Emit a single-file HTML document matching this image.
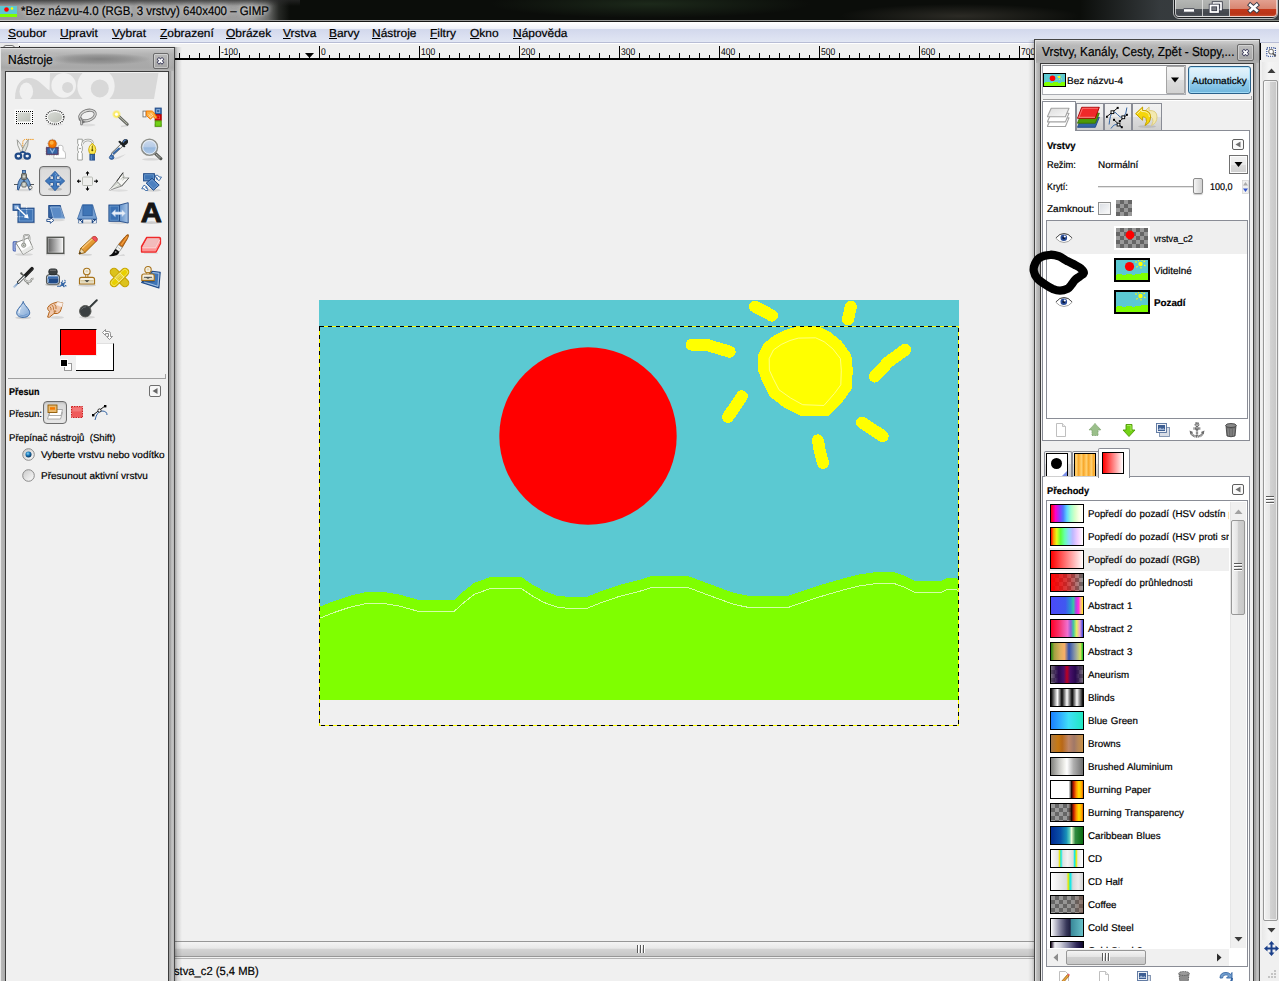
<!DOCTYPE html>
<html lang="cs">
<head>
<meta charset="utf-8">
<title>*Bez názvu-4.0 (RGB, 3 vrstvy) 640x400 – GIMP</title>
<style>
html,body{margin:0;padding:0;}
body{width:1279px;height:981px;overflow:hidden;position:relative;background:#f0f0f0;font-family:"Liberation Sans","DejaVu Sans",sans-serif;font-size:12px;color:#000;}
.abs,.abs *{position:absolute;}
div,svg,span{position:absolute;box-sizing:border-box;}
span{white-space:nowrap;-webkit-text-stroke:.2px #000;text-rendering:geometricPrecision;}
u{text-decoration:underline;text-underline-offset:1px;}
/* title bar */
#titlebar{left:0;top:0;width:1279px;height:22px;background:#0b0d0a;overflow:hidden;}
#menubar{left:0;top:22px;width:1279px;height:21px;background:linear-gradient(#fff 0,#fcfcfe 2px,#eef0f8 7px,#d2d8ec 7px,#d8ddef 12px,#e0e5f3 19px,#e3e8f5 20px,#b8bdd5 20px,#b8bdd5 21px);}
#menubar span{top:4.5px;font-size:11.6px;transform:scaleX(1.03);transform-origin:0 0;}
/* canvas area */
#canvasbg{left:175px;top:60px;width:860px;height:881px;background:#f0f0f0;}
#hruler{left:175px;top:43px;width:860px;height:17px;background:#f0f0f0;overflow:hidden;border-top:1px solid #fff;}
#menuline{left:0;top:43px;width:1279px;height:1px;background:#fff;}
#hscroll{left:175px;top:941px;width:860px;height:18px;}
#status{left:175px;top:959px;width:860px;height:22px;background:#f0f0f0;}
/* tool window */
.win{background:linear-gradient(90deg,#8d8d8d 0,#c9c9c9 2px,#bdbdbd 4px,#a9a9a9 6px);}
.sm{font-size:11px;}
</style>
</head>
<body>
<!-- ======= TITLE BAR ======= -->
<div id="titlebar">
  <div style="left:0;top:0;width:300px;height:22px;background:linear-gradient(90deg,#9a9a9a 0,#9c9c9c 252px,#6a6b69 268px,#262825 279px,rgba(11,13,10,0) 290px);"></div>
  <div style="left:0;top:0;width:300px;height:6px;background:linear-gradient(rgba(40,40,40,.75),rgba(40,40,40,0));"></div>
  <div style="left:400px;top:0;width:700px;height:20px;background:radial-gradient(ellipse 160px 14px at 250px 4px,rgba(30,44,28,.9),rgba(30,44,28,0)),radial-gradient(ellipse 120px 12px at 560px 16px,rgba(52,50,44,.8),rgba(52,50,44,0));"></div>
  <div style="left:0;top:20px;width:1279px;height:1px;background:linear-gradient(90deg,#c8c8c8,#9a9a9a 300px,#8a8e88);"></div>
  <div style="left:0;top:21px;width:1279px;height:1px;background:#151515;"></div>
  <svg style="left:0;top:6px" width="17" height="11" viewBox="0 0 17 11" shape-rendering="crispEdges"><rect width="17" height="11" fill="#5bc9d2"/><path d="M0 8l2-.5h3l2 .5 3-.5h3l2 .5h2v3h-17z" fill="#7fff00"/><circle cx="6.500" cy="3.500" r="2.300" fill="#f00" shape-rendering="auto"/><circle cx="12" cy="2.500" r="1.300" fill="#ff0" shape-rendering="auto"/></svg>
  <span style="left:21px;top:3.5px;font-size:12.5px;color:#000;transform:scaleX(.915);transform-origin:0 0;text-shadow:0 0 5px #ddd,0 0 8px #ccc;">*Bez názvu-4.0 (RGB, 3 vrstvy) 640x400 – GIMP</span>
  <div style="left:1080px;top:0;width:199px;height:20px;background:linear-gradient(90deg,rgba(56,61,64,0),rgba(56,61,64,.95) 80px,rgba(58,63,66,1) 199px);"></div>
  <div style="left:1173px;top:-3px;width:105px;height:22px;border:1px solid #b9bbbd;border-radius:0 0 6px 6px;background:#1d2022;"></div>
  <div style="left:1175px;top:-1px;width:28px;height:18px;border:1px solid rgba(235,235,235,.75);border-radius:0 0 0 4px;background:linear-gradient(#b4b6b4 0,#a6a8a6 9px,#4e5258 9px,#42464c 14px,#5c6068 17px);"></div>
  <div style="left:1203px;top:-1px;width:27px;height:18px;border:1px solid rgba(235,235,235,.75);border-left:none;background:linear-gradient(#b4b6b4 0,#a6a8a6 9px,#4e5258 9px,#42464c 14px,#5c6068 17px);"></div>
  <div style="left:1230px;top:-1px;width:47px;height:18px;border:1px solid rgba(245,225,220,.75);border-left:none;border-radius:0 0 4px 0;background:linear-gradient(#e2a090 0,#d88470 9px,#c4381a 9px,#b83418 14px,#d45c3c 17px);"></div>
  <svg style="left:1175px;top:0" width="102" height="17" viewBox="0 0 102 17"><rect x="8.500" y="8.700" width="11" height="3.500" rx=".5" fill="#fff" stroke="#3a3d4a" stroke-width=".9"/><g fill="none"><rect x="38.500" y="3" width="7.500" height="6.500" stroke="#3a3d4a" stroke-width="3.400"/><rect x="38.500" y="3" width="7.500" height="6.500" stroke="#fff" stroke-width="1.700"/><rect x="35.500" y="5.500" width="7.500" height="6.500" fill="#777a80" stroke="#3a3d4a" stroke-width="3.400"/><rect x="35.500" y="5.500" width="7.500" height="6.500" stroke="#fff" stroke-width="1.800"/></g><path d="M75.300 5L81.700 10.600M81.700 5L75.300 10.600" stroke="#3a3d4a" stroke-width="4.600" stroke-linecap="square"/><path d="M75.300 5L81.700 10.600M81.700 5L75.300 10.600" stroke="#fff" stroke-width="2.700" stroke-linecap="square"/></svg>
</div>
<!-- ======= MENU BAR ======= -->
<div id="menubar">
  <span style="left:8px"><u>S</u>oubor</span>
  <span style="left:60px"><u>U</u>pravit</span>
  <span style="left:112px"><u>V</u>ybrat</span>
  <span style="left:160px"><u>Z</u>obrazení</span>
  <span style="left:226px"><u>O</u>brázek</span>
  <span style="left:283px"><u>V</u>rstva</span>
  <span style="left:329px"><u>B</u>arvy</span>
  <span style="left:372px"><u>N</u>ástroje</span>
  <span style="left:430px"><u>F</u>iltry</span>
  <span style="left:470px"><u>O</u>kno</span>
  <span style="left:513px"><u>N</u>ápověda</span>
</div>
<div id="menuline"></div>
<!-- ======= RULER ======= -->
<div id="hruler"><svg style="left:0;top:-1px" width="860" height="17" viewBox="0 0 860 17" shape-rendering="crispEdges">
<rect x="0" y="15" width="860" height="2" fill="#000"/>
<path d="M4 10h1v5h-1zM14 12h1v3h-1zM24 10h1v5h-1zM34 12h1v3h-1zM44 3h1v12h-1zM54 12h1v3h-1zM64 10h1v5h-1zM74 12h1v3h-1zM84 10h1v5h-1zM94 12h1v3h-1zM104 10h1v5h-1zM114 12h1v3h-1zM124 10h1v5h-1zM134 12h1v3h-1zM144 3h1v12h-1zM154 12h1v3h-1zM164 10h1v5h-1zM174 12h1v3h-1zM184 10h1v5h-1zM194 12h1v3h-1zM204 10h1v5h-1zM214 12h1v3h-1zM224 10h1v5h-1zM234 12h1v3h-1zM244 3h1v12h-1zM254 12h1v3h-1zM264 10h1v5h-1zM274 12h1v3h-1zM284 10h1v5h-1zM294 12h1v3h-1zM304 10h1v5h-1zM314 12h1v3h-1zM324 10h1v5h-1zM334 12h1v3h-1zM344 3h1v12h-1zM354 12h1v3h-1zM364 10h1v5h-1zM374 12h1v3h-1zM384 10h1v5h-1zM394 12h1v3h-1zM404 10h1v5h-1zM414 12h1v3h-1zM424 10h1v5h-1zM434 12h1v3h-1zM444 3h1v12h-1zM454 12h1v3h-1zM464 10h1v5h-1zM474 12h1v3h-1zM484 10h1v5h-1zM494 12h1v3h-1zM504 10h1v5h-1zM514 12h1v3h-1zM524 10h1v5h-1zM534 12h1v3h-1zM544 3h1v12h-1zM554 12h1v3h-1zM564 10h1v5h-1zM574 12h1v3h-1zM584 10h1v5h-1zM594 12h1v3h-1zM604 10h1v5h-1zM614 12h1v3h-1zM624 10h1v5h-1zM634 12h1v3h-1zM644 3h1v12h-1zM654 12h1v3h-1zM664 10h1v5h-1zM674 12h1v3h-1zM684 10h1v5h-1zM694 12h1v3h-1zM704 10h1v5h-1zM714 12h1v3h-1zM724 10h1v5h-1zM734 12h1v3h-1zM744 3h1v12h-1zM754 12h1v3h-1zM764 10h1v5h-1zM774 12h1v3h-1zM784 10h1v5h-1zM794 12h1v3h-1zM804 10h1v5h-1zM814 12h1v3h-1zM824 10h1v5h-1zM834 12h1v3h-1zM844 3h1v12h-1zM854 12h1v3h-1z" fill="#000"/>
<path d="M130 10h9l-4.5 5z" fill="#000" shape-rendering="auto"/>
<g font-family="Liberation Sans,sans-serif" font-size="9.8" text-rendering="geometricPrecision" fill="#000" shape-rendering="auto"><text transform="translate(46 11.5) scale(.87 1)">-100</text><text transform="translate(146 11.5) scale(.87 1)">0</text><text transform="translate(246 11.5) scale(.87 1)">100</text><text transform="translate(346 11.5) scale(.87 1)">200</text><text transform="translate(446 11.5) scale(.87 1)">300</text><text transform="translate(546 11.5) scale(.87 1)">400</text><text transform="translate(646 11.5) scale(.87 1)">500</text><text transform="translate(746 11.5) scale(.87 1)">600</text><text transform="translate(846 11.5) scale(.87 1)">700</text></g>
</svg></div>
<!-- ======= CANVAS ======= -->
<div id="canvasbg"></div>
<svg id="img" style="left:319px;top:300px;" width="640" height="400" viewBox="0 0 640 400" shape-rendering="crispEdges">
<rect width="640" height="400" fill="#5bc9d2"/>
<circle cx="269" cy="136" r="88.7" fill="#ff0000" shape-rendering="auto"/>
<polygon points="477.3,27.3 499.9,27.3 511.1,32.5 522.4,41.9 531.8,55.0 533.3,70.0 532.1,88.8 524.3,100.0 510.2,115.1 483.0,115.7 466.1,107.6 451.1,96.3 443.6,81.3 439.4,70.0 439.8,55.0 445.4,43.8 454.8,36.3 466.1,30.6" fill="#ffff00" stroke="#ffff00" stroke-width="1" stroke-linejoin="round"/>
<polygon points="479.4,38.1 496.6,37.8 505.1,41.7 513.8,48.8 521.4,58.6 522.3,70.2 521.8,84.8 515.5,93.4 504.9,105.5 483.7,104.7 471.4,97.9 460.0,89.8 454.3,78.7 450.4,70.2 450.2,58.6 454.5,49.9 462.2,44.5 471.0,40.5" fill="none" stroke="#ffffa0" stroke-width="1" shape-rendering="auto" opacity=".8"/>
<g fill="none" stroke="#ffff00" stroke-width="12" stroke-linecap="round" stroke-linejoin="round"><polyline points="436.0,6.6 453.0,15.6"/><polyline points="531.8,6.6 529.0,19.4"/><polyline points="372.6,44.7 389.1,45.3 410.7,51.7"/><polyline points="586.2,49.8 569.3,62.0 555.8,76.6"/><polyline points="422.9,96.3 415.4,107.6 408.9,117.0"/><polyline points="543.0,122.6 563.7,136.1"/><polyline points="498.9,140.4 500.8,150.8 504.0,163.0"/></g>
<polygon points="0,307 15,301 30,296 45,292.5 65,292 80,294.5 100,300 135,300 145,291 155,283 170,277.5 202.5,277 212.5,284 225,291 237.5,295.5 250,297 267.5,297 282.5,291 300,285 320,280 332.5,276 369,276 385,282 400,287.5 415,293 430,296 469,296 485,290.5 505,284 522.5,279 540,274.5 557.5,272 575,272 585,275.5 596,281 622.5,281 627.5,278 637.5,278 640,280 640,400 0,400" fill="#7fff00"/>
<polyline points="0,318.5 15,312.5 30,307.5 45,304 65,303.5 80,306 100,311.5 135,311.5 145,302.5 155,294.5 170,289 202.5,288.5 212.5,295.5 225,302.5 237.5,307 250,308.5 267.5,308.5 282.5,302.5 300,296.5 320,291.5 332.5,287.5 369,287.5 385,293.5 400,299 415,304.5 430,307.5 469,307.5 485,302 505,295.5 522.5,290.5 540,286 557.5,283.5 575,283.5 585,287 596,292.5 622.5,292.5 627.5,289.5 637.5,289.5 640,291.5" fill="none" stroke="#d4ffa8" stroke-width="1" shape-rendering="crispEdges" opacity="1"/>
</svg>
<svg id="layerbound" style="left:319px;top:326px;" width="640" height="400" viewBox="0 0 640 400" shape-rendering="crispEdges">
<rect x="0.5" y="0.5" width="639" height="399" fill="none" stroke="#ffff00" stroke-width="1"/>
<rect x="0.5" y="0.5" width="639" height="399" fill="none" stroke="#000" stroke-width="1" stroke-dasharray="4 4"/>
</svg>
<!-- ======= H SCROLL / STATUS ======= -->
<div id="hscroll"><div style="left:0;top:0;width:860px;height:1px;background:#979797;"></div><div style="left:0;top:1px;width:860px;height:15px;background:linear-gradient(#f4f4f4,#e8e8e8 45%,#d4d4d4 50%,#c6c6c6);border-bottom:1px solid #979797;"></div><div style="left:0;top:17px;width:860px;height:1px;background:#b4b4b4;"></div>
<svg style="left:461px;top:4px" width="9" height="9" viewBox="0 0 9 9" shape-rendering="crispEdges"><path d="M1 0v8M4 0v8M7 0v8" stroke="#5a5a5a" stroke-width="1"/><path d="M2 0v8M5 0v8M8 0v8" stroke="#fff" stroke-width="1"/></svg></div>

<div id="status"><span style="left:-1px;top:4.500px;font-size:11.8px;transform:scaleX(.95);transform-origin:0 0;">stva_c2 (5,4 MB)</span></div>
<!-- ======= V SCROLL (image window) ======= -->
<div id="vscroll" style="left:1260px;top:43px;width:19px;height:938px;background:#f0f0f0;">
  <div style="left:-1px;top:0;width:2px;height:17px;background:#000;"></div>
  <svg style="left:6px;top:3.500px" width="11" height="11" viewBox="0 0 13 13"><rect x="1" y="1" width="10" height="10" fill="#fff" stroke="#1a3a8a" stroke-width="1.300" stroke-dasharray="1.300 1.200"/><circle cx="6" cy="5.500" r="2.800" fill="#fff" stroke="#777" stroke-width="1.300"/><path d="M8 7.500l3.500 3.500" stroke="#555" stroke-width="1.800"/></svg>
  <div style="left:2px;top:19px;width:17px;height:878px;background:linear-gradient(90deg,#e8e8e8,#f4f4f4 40%,#f0f0f0);"></div>
  <svg style="left:7px;top:25px" width="9" height="5" viewBox="0 0 9 5"><path d="M.5 5l4-4.500 4 4.500z" fill="#3c3c3c"/></svg>
  <div style="left:3px;top:37px;width:15px;height:841px;border:1px solid #979797;border-radius:2px;background:linear-gradient(90deg,#f2f2f2,#e6e6e6 45%,#d2d2d2 50%,#c6c6c6);box-shadow:inset 0 0 0 1px rgba(255,255,255,.6);"></div>
  <svg style="left:6px;top:452px" width="9" height="9" viewBox="0 0 9 9" shape-rendering="crispEdges"><path d="M0 1h8M0 4h8M0 7h8" stroke="#5a5a5a" stroke-width="1"/><path d="M0 2h8M0 5h8M0 8h8" stroke="#fff" stroke-width="1"/></svg>
  <svg style="left:7px;top:885px" width="9" height="5" viewBox="0 0 9 5"><path d="M.5 0h8l-4 4.500z" fill="#3c3c3c"/></svg>
  <svg style="left:4px;top:898px" width="15" height="15" viewBox="0 0 15 15"><path d="M7.500 0l3 3.500h-2v3h3v-2l3.500 3-3.500 3v-2h-3v3h2l-3 3.500-3-3.500h2v-3h-3v2l-3.500-3 3.500-3v2h3v-3h-2z" fill="#1a3f8a"/></svg>
  <svg style="left:6px;top:926px" width="12" height="12" viewBox="0 0 12 12"><g fill="#c4c4c4"><rect x="8" y="1" width="2" height="2"/><rect x="5" y="4" width="2" height="2"/><rect x="8" y="4" width="2" height="2"/><rect x="2" y="7" width="2" height="2"/><rect x="5" y="7" width="2" height="2"/><rect x="8" y="7" width="2" height="2"/></g></svg>
</div>
<div style="left:175px;top:47px;width:7px;height:934px;background:linear-gradient(90deg,rgba(0,0,0,.3),rgba(0,0,0,.12) 35%,rgba(0,0,0,0));"></div>
<div style="left:0;top:44px;width:175px;height:3px;background:linear-gradient(#f6f6f6,#e4e4e4);"></div>
<div style="left:0;top:43px;width:18px;height:4px;background:#e9e9e9;"></div>
<div style="left:3px;top:45px;width:12px;height:6px;border:1px solid #757575;border-radius:3px;background:#f4f4f4;"></div>
<div style="left:19px;top:46px;width:1px;height:1px;background:#000;"></div>
<!-- ======= TOOLBOX ======= -->
<div id="toolbox" style="left:0;top:47px;width:175px;height:934px;background:#b2b2b2;">
<div style="left:0;top:0;width:175px;height:934px;border-top:1px solid #3e3e3e;border-right:1px solid #4a4a4a;border-left:1px solid #e9e9e9;background:linear-gradient(90deg,#b9b9b9 0,#a8a8a8 5px,#a8a8a8 168px,#9a9a9a 169px,#c4c4c4 171px,#b0b0b0 174px);"></div>
<div style="left:1px;top:1px;width:173px;height:23px;border-top:1px solid #dedede;background:linear-gradient(#c6c6c6 0,#b4b4b4 5px,#aaaaaa 13px,#a8a8a8 19px,#b4b4b4 23px);"></div>
<div style="left:1px;top:2px;width:173px;height:22px;background:radial-gradient(ellipse 52px 6px at 98px 10px,rgba(128,128,128,.95),rgba(128,128,128,.5) 60%,rgba(128,128,128,0)),radial-gradient(ellipse 40px 9px at 28px 11px,rgba(200,200,200,.8),rgba(200,200,200,0)),radial-gradient(ellipse 14px 10px at 160px 12px,rgba(190,190,190,.7),rgba(190,190,190,0));"></div>
<span style="left:8px;top:4.5px;font-size:13px;transform:scaleX(.924);transform-origin:0 0;">Nástroje</span>
<div style="left:153px;top:6px;width:16px;height:16px;border:1px solid #6a6a6a;border-radius:2px;background:linear-gradient(#b9b9b9,#a4a4a4);box-shadow:inset 0 0 0 1px rgba(255,255,255,.35);"></div>
<svg style="left:153px;top:6px" width="16" height="16" viewBox="0 0 16 16"><path d="M6 6.3l3 3M9 6.3l-3 3" stroke="#3b3b5a" stroke-width="3.3" stroke-linecap="square"/><path d="M6 6.3l3 3M9 6.3l-3 3" stroke="#fff" stroke-width="1.8" stroke-linecap="square"/></svg>
<div id="tbc" style="left:5px;top:24px;width:164px;height:912px;background:#f0f0f0;border:1px solid #3c3c3c;border-bottom:none;"></div>
<svg style="left:12px;top:25px" width="150" height="28" viewBox="0 0 150 28"><defs><clipPath id="wbc"><rect x="0" y="0.9" width="150" height="26.1"/></clipPath></defs><g clip-path="url(#wbc)"><path d="M3 27C3 12 10 6 17 6C26 6 30 13 37.5 18.5L38 0.9L146.5 0.9L142 27Z" fill="#d8d8d8"/><ellipse cx="14.3" cy="19.5" rx="6.8" ry="9" fill="#f0f0f0"/><circle cx="51.7" cy="13.4" r="12.3" fill="#f0f0f0"/><circle cx="55.6" cy="15.4" r="5.5" fill="#d8d8d8"/><circle cx="84" cy="14" r="18.7" fill="#f0f0f0"/><circle cx="87.8" cy="16.4" r="9" fill="#d8d8d8"/></g></svg>
<div style="left:39px;top:119px;width:32px;height:30px;border:1px solid #6e6e6e;border-radius:4px;background:linear-gradient(#dadada,#e4e4e4);box-shadow:inset 0 1px 2px rgba(0,0,0,.15);"></div>
<svg style="left:11.5px;top:57.5px" width="24" height="24" viewBox="0 0 24 24"><defs><linearGradient id="gsel" x1="0" y1="0" x2="1" y2="1"><stop offset="0" stop-color="#d9dcd6"/><stop offset="1" stop-color="#bcbfb8"/></linearGradient></defs>
<rect x="3.5" y="18.5" width="17" height="1.3" fill="#000" opacity=".1"/><rect x="2.5" y="4.5" width="19" height="15" fill="#fff" opacity=".9"/><rect x="5.5" y="7.5" width="13" height="9" fill="url(#gsel)"/><path d="M3.5 5.5h1v1h-1zM3.5 17.5h1v1h-1zM5.5 5.5h1v1h-1zM5.5 17.5h1v1h-1zM7.5 5.5h1v1h-1zM7.5 17.5h1v1h-1zM9.5 5.5h1v1h-1zM9.5 17.5h1v1h-1zM11.5 5.5h1v1h-1zM11.5 17.5h1v1h-1zM13.5 5.5h1v1h-1zM13.5 17.5h1v1h-1zM15.5 5.5h1v1h-1zM15.5 17.5h1v1h-1zM17.5 5.5h1v1h-1zM17.5 17.5h1v1h-1zM19.5 5.5h1v1h-1zM19.5 17.5h1v1h-1zM3.5 7.5h1v1h-1zM19.5 7.5h1v1h-1zM3.5 9.5h1v1h-1zM19.5 9.5h1v1h-1zM3.5 11.5h1v1h-1zM19.5 11.5h1v1h-1zM3.5 13.5h1v1h-1zM19.5 13.5h1v1h-1zM3.5 15.5h1v1h-1zM19.5 15.5h1v1h-1z" fill="#000" shape-rendering="crispEdges"/></svg>
<svg style="left:42.5px;top:57.5px" width="24" height="24" viewBox="0 0 24 24"><ellipse cx="12" cy="19.5" rx="8" ry="1.2" fill="#000" opacity=".08"/><ellipse cx="12" cy="12.3" rx="9.6" ry="7.6" fill="#fff"/><ellipse cx="12" cy="12.3" rx="7.3" ry="5.4" fill="url(#gsel)"/><ellipse cx="12" cy="12.3" rx="8.9" ry="6.9" fill="none" stroke="#000" stroke-width="1.15" stroke-dasharray="1.05 1.04"/></svg>
<svg style="left:74.5px;top:57.5px" width="24" height="24" viewBox="0 0 24 24"><ellipse cx="12.5" cy="20" rx="8" ry="1.5" fill="#000" opacity=".08"/><g fill="none" stroke-linecap="round"><ellipse cx="12.5" cy="10.5" rx="8" ry="5" transform="rotate(-18 12.5 10.5)" stroke="#777" stroke-width="3"/><ellipse cx="12.5" cy="10.5" rx="8" ry="5" transform="rotate(-18 12.5 10.5)" stroke="#d8d8d6" stroke-width="1.4"/><path d="M5.5 13.5q1.5 2 1 5.5M5 14.5l3.5 2.5" stroke="#777" stroke-width="2.6"/><path d="M5.5 13.5q1.5 2 1 5.5" stroke="#d0d0ce" stroke-width="1"/></g></svg>
<svg style="left:106.5px;top:57.5px" width="24" height="24" viewBox="0 0 24 24"><defs><radialGradient id="gglow"><stop offset="0" stop-color="#fff"/><stop offset=".2" stop-color="#fff"/><stop offset=".5" stop-color="#fce94f"/><stop offset="1" stop-color="#fce94f" stop-opacity="0"/></radialGradient></defs>
<path d="M14 21.5L21 20.5" stroke="#000" stroke-width="1.6" opacity=".1"/><path d="M11.5 11L20.3 19.2" stroke="#555753" stroke-width="2.8" stroke-linecap="round"/><path d="M11.5 10.9L20 18.8" stroke="#b5b8a8" stroke-width="1.1" stroke-linecap="round"/><circle cx="9.5" cy="9.3" r="4.7" fill="url(#gglow)"/></svg>
<svg style="left:138.5px;top:57.5px" width="24" height="24" viewBox="0 0 24 24"><rect x="15.5" y="19" width="7.5" height="3.3" fill="#5c3566" opacity=".25"/><rect x="16.2" y="3.1" width="6" height="6" fill="#3d6eb0" stroke="#204a87"/><rect x="17.7" y="4.6" width="3" height="3" fill="#3465a4" stroke="#8fb3de" stroke-width=".8"/><rect x="16.2" y="9.7" width="6" height="5.6" fill="#d40000" stroke="#a40000"/><rect x="17.7" y="11" width="3" height="2.8" fill="none" stroke="#ef5a5a" stroke-width=".6"/><rect x="16.2" y="15.9" width="6" height="5.4" fill="#73d216" stroke="#4e9a06"/>
<rect x="4" y="6.1" width="3" height="5.8" fill="#fff" stroke="#777" stroke-width=".9"/><path d="M7.3 6H12.5Q13.5 6 14.5 7L18 12.5L16.5 13.5L14 11.5L11.5 14.2L7.3 10.5Z" fill="#fcaf3e" stroke="#f57900" stroke-width="1" stroke-linejoin="round"/><path d="M9.5 9L12 12.5M11.5 8L14 11.5M9.5 12L13 8.5M11 13L14 10" stroke="#fff" stroke-width=".55" opacity=".75"/></svg>
<svg style="left:11.5px;top:89.5px" width="24" height="24" viewBox="0 0 24 24"><ellipse cx="11" cy="21.7" rx="8" ry="1.2" fill="#000" opacity=".1"/><path d="M10.8 11V5.5Q10.8 2.4 14 2.4H22.4" fill="none" stroke="#f08c00" stroke-width="1" stroke-dasharray="1.3 .8"/>
<path d="M5.2 2.8Q4.8 8 8.5 14.5L11 15.5L11.6 13Q9 7 5.2 2.8Z" fill="#f2f2f0" stroke="#888a85" stroke-width=".8" stroke-linejoin="round"/><path d="M16.3 2.6Q16.8 8 13.2 14.5L10.6 15.5L10 13Q12.5 7 16.3 2.6Z" fill="#dcdfd8" stroke="#888a85" stroke-width=".8" stroke-linejoin="round"/>
<ellipse cx="6.4" cy="19.1" rx="2.8" ry="2.5" fill="#eef1f6" stroke="#204a87" stroke-width="2.2"/><ellipse cx="15.2" cy="19.1" rx="2.8" ry="2.5" fill="#eef1f6" stroke="#204a87" stroke-width="2.2"/><path d="M8 16.3L10.8 14.8L13.6 16.3" fill="none" stroke="#204a87" stroke-width="1.8"/></svg>
<svg style="left:42.5px;top:89.5px" width="24" height="24" viewBox="0 0 24 24"><path d="M10.8 21.3V18.5Q10.8 16.5 13 16.3Q13 13.5 15 13V9.8Q15 8.3 17 8.3H18Q20 8.3 20 10.3V13.5Q22.5 14 22.5 17V21.3Z" fill="#fff" stroke="#bcbcbc" stroke-width=".9" stroke-linejoin="round"/>
<rect x="3.7" y="10.7" width="11.3" height="6.6" fill="#3465a4" stroke="#5c3566" stroke-width="1.1"/><rect x="3.1" y="10.1" width="12.5" height="7.8" fill="none" stroke="#444" stroke-width=".6" stroke-dasharray=".8 .9"/><path d="M7 11.5L9.3 15.5L11.6 11.5" fill="none" stroke="#8fb3de" stroke-width="1.3"/>
<circle cx="9.4" cy="6.8" r="4.5" fill="none" stroke="#777" stroke-width=".7" stroke-dasharray=".8 .9"/><circle cx="9.4" cy="6.8" r="3.9" fill="#f57900" stroke="#ce5c00" stroke-width=".8"/><circle cx="8.7" cy="5.8" r="2" fill="#fcaf3e"/></svg>
<svg style="left:74.5px;top:89.5px" width="24" height="24" viewBox="0 0 24 24"><path d="M2.7 2.2H7.3V6.5L6.3 8L7.3 9.5V13.5L6.3 15L7.3 16.5V23H2.7V16.5L3.7 15L2.7 13.5V9.5L3.7 8L2.7 6.5Z" fill="#fff" stroke="#888a85" stroke-width=".8"/><circle cx="5" cy="11.5" r=".8" fill="#888a85"/>
<path d="M7.3 7Q8.5 3 13 3T17.6 6.5" fill="none" stroke="#999b96" stroke-width="2.4"/><path d="M7.3 7Q8.5 3 13 3T17.6 6.5" fill="none" stroke="#f4f4f2" stroke-width="1.1"/>
<path d="M17.3 6.3Q20.8 9 20.8 12.5Q20.8 15.5 19 17.3H15.5Q13.7 15.5 13.7 12.5Q13.7 9 17.3 6.3Z" fill="#fce94f" stroke="#c4a000" stroke-width=".9"/><path d="M17.3 8.5V13" stroke="#5a4a00" stroke-width=".8"/><circle cx="17.3" cy="13.3" r="1" fill="#5a4a00"/><path d="M15 12Q15 9.5 16.8 8" fill="none" stroke="#fff8b0" stroke-width=".8"/>
<rect x="14.9" y="17.3" width="4.7" height="5.8" fill="#3465a4" stroke="#204a87" stroke-width=".8"/><path d="M16.3 18V23" stroke="#729fcf" stroke-width=".8"/></svg>
<svg style="left:106.5px;top:89.5px" width="24" height="24" viewBox="0 0 24 24"><path d="M5 22.5Q12 23 19 17L8 21Z" fill="#000" opacity=".1"/><path d="M15.5 7.5L6 16.5L5.2 18.5" fill="none" stroke="#555753" stroke-width="3.2" stroke-linecap="round" stroke-linejoin="round"/><path d="M15.5 7.5L6.3 16.3L5.5 18" fill="none" stroke="#fff" stroke-width="1.9" stroke-linecap="round" stroke-linejoin="round"/><path d="M12 11.5L6.5 16.5" fill="none" stroke="#3465a4" stroke-width="1.9" stroke-linecap="round"/>
<path d="M12.6 4.8L17.2 9.2" stroke="#1c2022" stroke-width="2.2" stroke-linecap="round"/><path d="M15 6.8Q15 3 18 2Q20.5 1.5 21 3.5Q21.5 5.5 20 7Q18 8.8 15.5 8Z" fill="#1c2022"/><path d="M16.5 5Q17 3 19 2.8" stroke="#4a78b8" stroke-width="1.3" fill="none" stroke-linecap="round"/>
<path d="M4.6 17.3Q7 19.5 7 20.7A2.4 2.2 0 0 1 2.3 20.7Q2.3 19.3 4.6 17.3Z" fill="#3a6db0" stroke="#204a87" stroke-width=".7"/><circle cx="4" cy="20.3" r=".7" fill="#9dbde3"/></svg>
<svg style="left:138.5px;top:89.5px" width="24" height="24" viewBox="0 0 24 24"><defs><linearGradient id="gzm" x1="0" y1="0" x2="0" y2="1"><stop offset="0" stop-color="#cfdcee"/><stop offset=".5" stop-color="#b6cbe6"/><stop offset=".53" stop-color="#96b7dd"/><stop offset="1" stop-color="#b4cdea"/></linearGradient></defs>
<ellipse cx="12" cy="22.3" rx="9" ry="1.2" fill="#000" opacity=".1"/><path d="M16.5 16.6L21.8 21.6" stroke="#555753" stroke-width="3.2" stroke-linecap="round"/><path d="M17.3 17.4L21.5 21.4" stroke="#c8cac4" stroke-width="1.5" stroke-dasharray=".8 .7"/>
<circle cx="10.5" cy="10.2" r="8" fill="url(#gzm)" stroke="#8d8f8a" stroke-width="1.5"/><circle cx="10.5" cy="10.2" r="6.8" fill="none" stroke="#fff" stroke-width=".9" opacity=".75"/></svg>
<svg style="left:11.5px;top:121.5px" width="24" height="24" viewBox="0 0 24 24"><ellipse cx="12" cy="21" rx="9" ry="1.3" fill="#000" opacity=".1"/><path d="M2 15.5h4M18 15.5h4" stroke="#2e3436" stroke-width=".8"/>
<path d="M10 7.5q-5 5-4.5 13l1 .5q1.5-6 5.5-9zM14 7.5q5 5 4.5 13l-1 .5q-1.5-6-5.5-9z" fill="#729fcf" stroke="#204a87" stroke-width=".9" stroke-linejoin="round"/>
<rect x="10.5" y="1.5" width="3" height="3" fill="#729fcf" stroke="#204a87" stroke-width=".8"/><rect x="9.5" y="4.5" width="5" height="6" rx="1" fill="#888a85" stroke="#555753" stroke-width=".9"/><circle cx="12" cy="7.5" r="1.3" fill="#d3d7cf"/>
<rect x="9.8" y="13" width="4.4" height="5" rx="1" fill="#d3d7cf" stroke="#555753" stroke-width=".9"/><circle cx="18.5" cy="18.5" r="1.6" fill="#fff" stroke="#555753" stroke-width=".8"/></svg>
<svg style="left:42.5px;top:121.5px" width="24" height="24" viewBox="0 0 24 24"><ellipse cx="12" cy="20.3" rx="7" ry="1.7" fill="#000" opacity=".16"/><path d="M12 2.3L16.3 7H13.5V10.5H17V7.7L21.7 12L17 16.3V13.5H13.5V17H16.3L12 21.7L7.7 17H10.5V13.5H7V16.3L2.3 12L7 7.7V10.5H10.5V7H7.7Z" fill="#3f79bd" stroke="#2a5a9c" stroke-width=".9" stroke-linejoin="round"/><path d="M12 3.8L14.2 6.2H12.7V11.3H17.8V9.6" fill="none" stroke="#8fb3de" stroke-width=".7" opacity=".85"/></svg>
<svg style="left:74.5px;top:121.5px" width="24" height="24" viewBox="0 0 24 24"><rect x="7.5" y="8" width="10" height="8.5" rx="1" fill="#eeeeec" stroke="#babdb6" stroke-width="1"/><g fill="#000" stroke="#000" stroke-width="1"><path d="M12.5 6.5v-3M12.5 17.5v3M6 12.2h-3M19 12.2h3" fill="none"/><path d="M12.5 2.5l1.5 1.8h-3zM12.5 21.5l1.5-1.8h-3zM2 12.2l1.8-1.5v3zM23 12.2l-1.8-1.5v3z" stroke-width=".6"/></g></svg>
<svg style="left:106.5px;top:121.5px" width="24" height="24" viewBox="0 0 24 24"><ellipse cx="12" cy="21.5" rx="9" ry="1.2" fill="#000" opacity=".08"/><path d="M2.3 21.3L9.8 12.2L14.7 17.1Z" fill="#d3d7cf" stroke="#777" stroke-width=".8" stroke-linejoin="round"/><path d="M2.3 21.3L12.2 14.6" stroke="#fff" stroke-width=".8"/><path d="M9.8 12.2L16 3.7L16.5 9L21.9 8.9L14.7 17.1Z" fill="#f6f6f4" stroke="#888a85" stroke-width=".8" stroke-linejoin="round"/><path d="M9.8 12.2L16 3.7" stroke="#333" stroke-width="1"/><path d="M14.7 17.1L21.9 8.9" stroke="#555" stroke-width=".8"/><path d="M14 10.5L16.3 7.5Q17.5 7 17.8 8.3L15.5 11.5" fill="none" stroke="#babdb6" stroke-width=".9"/></svg>
<svg style="left:138.5px;top:121.5px" width="24" height="24" viewBox="0 0 24 24"><ellipse cx="14" cy="21.3" rx="8" ry="1.4" fill="#000" opacity=".12"/><rect x="4.6" y="4.7" width="10.8" height="7.2" fill="#3f75b6" stroke="#204a87" stroke-width="1"/><rect x="5.7" y="5.8" width="8.6" height="5" fill="none" stroke="#729fcf" stroke-width=".7"/><path d="M13.1 9.2L20.2 16.1L14.4 21.3L7.2 14.1Z" fill="#4c80c0" stroke="#204a87" stroke-width="1" stroke-linejoin="round"/><path d="M13.1 10.7L18.7 16.1L14.4 19.9L8.7 14.1Z" fill="none" stroke="#7ea6d6" stroke-width=".7"/>
<path d="M16.5 6.3Q19.5 5.5 20 8H22.5L20.2 11.7L17 9.5H18.5Q18.2 8 16.5 8.3Z" fill="#fff" stroke="#3465a4" stroke-width=".9" stroke-linejoin="round"/><path d="M8.7 21.5Q5.7 22.3 5.2 19.8H2.7L5 16.1L8.2 18.3H6.7Q7 19.8 8.7 19.5Z" fill="#fff" stroke="#3465a4" stroke-width=".9" stroke-linejoin="round"/></svg>
<svg style="left:11.5px;top:153.5px" width="24" height="24" viewBox="0 0 24 24"><rect x="5" y="21" width="18" height="1.8" fill="#000" opacity=".1"/><rect x="6" y="7.2" width="16" height="14" fill="#3f75b6" stroke="#204a87" stroke-width="1.1"/><rect x="7.2" y="8.4" width="13.6" height="11.6" fill="none" stroke="#7ea6d6" stroke-width=".8"/>
<rect x="1.1" y="3.3" width="7" height="6" fill="#5a8bc7" stroke="#204a87" stroke-width="1.1"/><rect x="3" y="5" width="3" height="2.6" fill="#8fb3de" stroke="#d8e4f3" stroke-width=".5"/><path d="M9.5 4.7H14.7V14.5M3.8 10.5V15.7H13" fill="none" stroke="#fff" stroke-width=".9" stroke-dasharray="1 1.2" opacity=".9"/><path d="M5 6.2L14.5 15.5" stroke="#fff" stroke-width="1.4"/><path d="M16.7 17.6L12 16.5L15.6 13Z" fill="#fff"/></svg>
<svg style="left:42.5px;top:153.5px" width="24" height="24" viewBox="0 0 24 24"><ellipse cx="13" cy="19" rx="9" ry="1.3" fill="#000" opacity=".1"/><path d="M5.7 4.5H17.3V16.5H5.7Z" fill="#3465a4" stroke="#204a87" stroke-width=".9"/><path d="M7.5 6H17.3L21.4 17.3H10.5Z" fill="#5f8fc9" stroke="#9dbde3" stroke-width=".9" stroke-linejoin="round" opacity=".92"/><path d="M5.7 4.5H17.3L21.4 17.3" fill="none" stroke="#204a87" stroke-width=".9" opacity=".6"/>
<path d="M3.8 18.3H7.3V16.5L10.9 19.4L7.3 22.3V20.5H3.8Z" fill="#fff" stroke="#204a87" stroke-width=".9" stroke-linejoin="round"/></svg>
<svg style="left:74.5px;top:153.5px" width="24" height="24" viewBox="0 0 24 24"><ellipse cx="12" cy="21.8" rx="10" ry="1.2" fill="#000" opacity=".1"/><path d="M7.5 3.8H17.6L21.8 18H2.5Z" fill="#6a98cf" stroke="#3465a4" stroke-width=".9" stroke-linejoin="round" opacity=".92"/><rect x="7.9" y="4.2" width="9.3" height="10.5" fill="#3f75b6" stroke="#2a5a9a" stroke-width=".7"/>
<rect x="3.3" y="18" width="4.9" height="4.2" fill="#204a87"/><rect x="16.7" y="18" width="4.9" height="4.2" fill="#204a87"/><path d="M7.5 18.7L4.5 21.5M4.3 19.3V21.6H6.6M17.4 18.7L20.4 21.5M20.6 19.3V21.6H18.3" stroke="#fff" stroke-width="1" fill="none"/></svg>
<svg style="left:106.5px;top:153.5px" width="24" height="24" viewBox="0 0 24 24"><ellipse cx="12" cy="22" rx="10" ry="1.2" fill="#000" opacity=".1"/><defs><linearGradient id="gfl" x1="0" y1="0" x2="1" y2="0"><stop offset="0" stop-color="#5f8fc9"/><stop offset="1" stop-color="#a9c5e6"/></linearGradient></defs><path d="M12.4 4L21.2 1.7V22L12.4 20.3Z" fill="url(#gfl)" stroke="#204a87" stroke-width=".9" stroke-linejoin="round"/><rect x="1.9" y="4" width="10.5" height="16.3" fill="#3a70b3" stroke="#204a87" stroke-width=".9"/><rect x="3" y="5.1" width="8.3" height="14.1" fill="none" stroke="#729fcf" stroke-width=".7"/>
<path d="M4.6 12.2L8.3 8.7V10.9H14.9V8.7L18.6 12.2L14.9 15.7V13.5H8.3V15.7Z" fill="#e8eef7" stroke="#a9c5e6" stroke-width=".6" stroke-linejoin="round"/></svg>
<svg style="left:138.5px;top:153.5px" width="24" height="24" viewBox="0 0 24 24"><ellipse cx="12.4" cy="21.6" rx="10" ry="1.3" fill="#000" opacity=".15"/><text x="0" y="0" transform="translate(12.4 21.3) scale(1.07 1)" text-anchor="middle" font-family="Liberation Sans,sans-serif" font-weight="bold" font-size="27.4" fill="#151515" stroke="#151515" stroke-width=".9">A</text></svg>
<svg style="left:11.5px;top:185.5px" width="24" height="24" viewBox="0 0 24 24"><ellipse cx="12" cy="21.5" rx="9" ry="1.3" fill="#000" opacity=".1"/><path d="M5.5 9.8H2.1V17H3.8" fill="none" stroke="#3a55a8" stroke-width="2.9" stroke-linejoin="round"/><path d="M5.5 9.8H2.1V17H3.5" fill="none" stroke="#a9bce8" stroke-width="1.2" stroke-linejoin="round"/><path d="M3.8 9.7L16.6 4.8L21 15.6L11.2 21.5Z" fill="#fff" stroke="#888a85" stroke-width="1" stroke-linejoin="round"/><path d="M11.2 21.5L21 15.6L19.5 12L9.5 18Z" fill="#e4e5e2" opacity=".8"/>
<path d="M11.7 12.2V4.5Q11.7 1.9 14.6 1.9T17.5 4.5V7" fill="none" stroke="#888a85" stroke-width="1.7"/><path d="M11.7 12.2V4.5Q11.7 1.9 14.6 1.9T17.5 4.5V7" fill="none" stroke="#fff" stroke-width=".6"/><circle cx="11.7" cy="12.2" r="2.1" fill="#d3d7cf" stroke="#888a85" stroke-width=".9"/><circle cx="11.7" cy="12.2" r=".8" fill="#888a85"/></svg>
<svg style="left:42.5px;top:185.5px" width="24" height="24" viewBox="0 0 24 24"><defs><linearGradient id="gbl" x1="0" y1="0" x2="1" y2="0"><stop offset="0" stop-color="#5a5a5a"/><stop offset="1" stop-color="#fdfdfd"/></linearGradient></defs><rect x="3" y="20.5" width="19" height="1.8" fill="#000" opacity=".1"/><rect x="4.2" y="4.3" width="16.6" height="16" fill="url(#gbl)" stroke="#555753" stroke-width="1.4"/><rect x="5.4" y="5.5" width="14.2" height="13.6" fill="none" stroke="#fff" stroke-width=".6" opacity=".45"/></svg>
<svg style="left:74.5px;top:185.5px" width="24" height="24" viewBox="0 0 24 24"><ellipse cx="11" cy="21.7" rx="6" ry="1" fill="#000" opacity=".12"/><path d="M4.1 21L5.8 15.2L17.8 4Q19.8 2.8 21.3 4.3T21.8 7.8L10 19.5Z" fill="#e39a34" stroke="#8f5902" stroke-width=".9" stroke-linejoin="round"/><path d="M7 15.5L18.5 4.8" stroke="#f9c77a" stroke-width="1.3"/><path d="M9.5 19L21 8" stroke="#c4781a" stroke-width="1"/><path d="M17.8 4Q19.8 2.8 21.3 4.3T21.8 7.8L20.8 8.8L16.8 4.9Z" fill="#f0525f" stroke="#cc3344" stroke-width=".7"/><path d="M4.1 21L5.8 15.2L10 19.5Z" fill="#ecdcb8" stroke="#8f5902" stroke-width=".7" stroke-linejoin="round"/><path d="M4.1 21L4.8 18.7L6.5 20.3Z" fill="#222"/></svg>
<svg style="left:106.5px;top:185.5px" width="24" height="24" viewBox="0 0 24 24"><path d="M9 22.5H18L17 21.5Z" fill="#000" opacity=".2"/><path d="M21.3 1.7Q22 2.5 20.5 5.5L15.2 14.5L11.3 11.7L17.8 4Q20.3 1.2 21.3 1.7Z" fill="#c8701a" stroke="#8f4a02" stroke-width=".8" stroke-linejoin="round"/><path d="M20.3 3.3L14.3 11.8" stroke="#f5a040" stroke-width="1.3"/><path d="M11.3 11.7L15.2 14.5L12.3 18.8L8.5 16Z" fill="#f4f4f2" stroke="#888a85" stroke-width=".8" stroke-linejoin="round"/><path d="M10.5 14L13.5 16.3" stroke="#babdb6" stroke-width=".8"/><path d="M8.5 16L12.3 18.8Q12 21.3 9.5 22.3Q6 23.3 1.8 23.1Q5.5 21 6.5 18.7Q7.3 16.8 8.5 16Z" fill="#0c0c0c"/><circle cx="8.7" cy="19" r=".9" fill="#888"/></svg>
<svg style="left:138.5px;top:185.5px" width="24" height="24" viewBox="0 0 24 24"><rect x="5" y="19.5" width="14" height="1.5" fill="#000" opacity=".07"/><path d="M7.8 4.5H20.2Q21.6 4.6 21.4 6L21.4 10.6L17 19H2.6V13.5Z" fill="#f7b4b4" stroke="#ef2929" stroke-width="1.5" stroke-linejoin="round"/><path d="M3.3 14.8H16.6L20.7 7" fill="none" stroke="#fbd0d0" stroke-width="1.1"/><path d="M3.4 15.4H16.8L20.7 8.5V10.5L16.7 18.3H3.4Z" fill="#f88" opacity=".75"/><path d="M8.2 5.6H19.8L16.2 13.6H4Z" fill="#f2bcbc"/></svg>
<svg style="left:11.5px;top:217.5px" width="24" height="24" viewBox="0 0 24 24"><defs><linearGradient id="gsp" x1="1" y1="0" x2="0" y2="1"><stop offset="0" stop-color="#3465a4"/><stop offset="1" stop-color="#729fcf" stop-opacity=".25"/></linearGradient></defs><path d="M6 17.3L.7 21.7L2.5 23.3L6.8 18.3Z" fill="url(#gsp)"/><path d="M20 3.7L13.2 10.7" stroke="#1c1c1c" stroke-width="3.6" stroke-linecap="round"/><path d="M20.8 4.3L14.3 11.3" stroke="#555" stroke-width=".7" stroke-dasharray=".7 .7"/><path d="M12.5 11.3L6.5 17.3" stroke="#2e3436" stroke-width="3" stroke-linecap="round"/><path d="M12.3 11.7L6.7 17.2" stroke="#f4f4f4" stroke-width="1.3" stroke-linecap="round"/><path d="M9 8.3L11.5 10.3" stroke="#555753" stroke-width="1.5"/><circle cx="9.3" cy="8.3" r="1.1" fill="#555753"/><path d="M12.5 13.5Q13 16.5 16 16.8Q19 17 19.3 14.8Q19.7 13.5 21.5 13.8" fill="none" stroke="#888a85" stroke-width="2"/><path d="M12.5 13.5Q13 16.5 16 16.8Q19 17 19.3 14.8Q19.7 13.5 21.5 13.8" fill="none" stroke="#eeeeec" stroke-width=".8"/><path d="M14.5 17.5L17 19.5" stroke="#888a85" stroke-width="1.3"/></svg>
<svg style="left:42.5px;top:217.5px" width="24" height="24" viewBox="0 0 24 24"><ellipse cx="10" cy="19.8" rx="8" ry="1.5" fill="#000" opacity=".18"/><path d="M3.5 12.3Q3.5 10 6.3 9.5H13.6Q16.4 10 16.4 12.3V17Q16.4 19 13.6 19.3H6.3Q3.5 19 3.5 17Z" fill="#c2d2e8" stroke="#555753" stroke-width="1.1"/><path d="M4.7 13.3H15.2V16.5Q15.2 18.2 13 18.2H7Q4.7 18.2 4.7 16.5Z" fill="#204a87"/><path d="M5 12.3H15" stroke="#3a6db0" stroke-width="1.7"/><path d="M5.5 14V17" stroke="#729fcf" stroke-width="1"/><rect x="5.8" y="3.9" width="8.4" height="5.8" rx="2.3" fill="#3a3f41" stroke="#23282a" stroke-width=".8"/><path d="M7.5 5.2H12.5" stroke="#777" stroke-width="1.1" stroke-linecap="round"/>
<g stroke="#3465a4" stroke-linecap="round" fill="none"><path d="M17.5 21L22 17.5" stroke-width="1.5"/><path d="M18.5 17.5L21 21.5" stroke-width="1.5"/><path d="M14.5 21.3H16.5M21.8 15.3L22.2 16M19.5 15.8V16.3M22.5 20.5L23 21" stroke-width="1.1"/></g><circle cx="19.8" cy="19.5" r="1.5" fill="#3465a4"/></svg>
<svg style="left:74.5px;top:217.5px" width="24" height="24" viewBox="0 0 24 24"><ellipse cx="12" cy="20.3" rx="9" ry="1.4" fill="#000" opacity=".13"/><circle cx="11.8" cy="6.6" r="3.3" fill="#f6f1e2" stroke="#a6721b" stroke-width="1.1"/><circle cx="11.8" cy="6.3" r="1.3" fill="#e0d6bc"/><rect x="10.7" y="9.7" width="2.2" height="3" fill="#f6f1e2" stroke="#a6721b" stroke-width=".9"/><path d="M4.5 19V14.3Q4.5 12.3 6.5 12.3H17.5Q19.5 12.3 19.5 14.3V19Z" fill="#f6f1e2" stroke="#a6721b" stroke-width="1.2" stroke-linejoin="round"/><path d="M5.5 15.7H18.5V18H5.5Z" fill="#e4dcc2"/><path d="M5.5 15.7H18.5" stroke="#c9b583" stroke-width=".8"/><path d="M9.5 15.3H14.5L12 17.3Z" fill="#2e3436"/></svg>
<svg style="left:106.5px;top:217.5px" width="24" height="24" viewBox="0 0 24 24"><g stroke-linejoin="round"><rect x="1" y="8.3" width="23" height="7.6" rx="3.7" transform="rotate(45 12.5 12.5) translate(0 .4)" fill="#dcc21c" stroke="#c4a000" stroke-width="1"/><rect x="1" y="8.3" width="23" height="7.6" rx="3.7" transform="rotate(-45 12.5 12.5) translate(0 .4)" fill="#e8d000" stroke="#c4a000" stroke-width="1"/><rect x="2.3" y="9.5" width="20.4" height="5.2" rx="2.5" transform="rotate(-45 12.5 12.5) translate(0 .4)" fill="none" stroke="#f5e87a" stroke-width=".7"/><rect x="9" y="9" width="7" height="6" transform="rotate(-45 12.5 12.5) translate(0 .4)" fill="#ead540" stroke="#f6eca0" stroke-width=".8"/><path d="M11 14L14 11M12 15L15 12" stroke="#d4ba10" stroke-width=".6"/></g></svg>
<svg style="left:138.5px;top:217.5px" width="24" height="24" viewBox="0 0 24 24"><path d="M13.1 6.3L21.2 7.3L19.9 22.9L2.6 17.4Z" fill="#3f75b6" stroke="#204a87" stroke-width="1.1" stroke-linejoin="round"/><path d="M13.5 7.5L20 8.3L18.9 21.3L5 16.9" fill="none" stroke="#c8daf0" stroke-width=".8"/><ellipse cx="9.5" cy="16.3" rx="6.5" ry="1.2" fill="#000" opacity=".25"/><circle cx="9" cy="4.7" r="3.2" fill="#f6f1e2" stroke="#a6721b" stroke-width="1.1"/><circle cx="9" cy="4.4" r="1.2" fill="#e0d6bc"/><rect x="8" y="7.6" width="2" height="1.8" fill="#f6f1e2" stroke="#a6721b" stroke-width=".8"/><path d="M2.8 15.4V11Q2.8 9 4.8 9H13.2Q15.2 9 15.2 11V15.4Z" fill="#f6f1e2" stroke="#a6721b" stroke-width="1.2" stroke-linejoin="round"/><path d="M3.8 12.3H14.2V14.4H3.8Z" fill="#e4dcc2"/><path d="M6.5 12.5H11.5L9 13.8Z" fill="#2e3436"/><path d="M5 12.3H13" stroke="#2e3436" stroke-width=".8"/></svg>
<svg style="left:11.5px;top:249.5px" width="24" height="24" viewBox="0 0 24 24"><defs><linearGradient id="gdr" x1="0" y1="0" x2="1" y2="1"><stop offset="0" stop-color="#dce8f5"/><stop offset="1" stop-color="#7ea6d6"/></linearGradient></defs><ellipse cx="11.2" cy="20.8" rx="8" ry="1.4" fill="#000" opacity=".13"/><path d="M11.2 4.4C11.8 8 17.7 12 17.7 15.7C17.7 18.7 14.8 20.4 11.2 20.4C7.6 20.4 4.7 18.7 4.7 15.7C4.7 12 10.6 8 11.2 4.4Z" fill="url(#gdr)" stroke="#3465a4" stroke-width="1" stroke-linejoin="round"/><path d="M7 16Q6.5 13.5 9 10.5" fill="none" stroke="#fff" stroke-width="1.1" opacity=".75"/><path d="M7.5 18Q11 20 15.5 17" fill="none" stroke="#5a8bc7" stroke-width=".8" opacity=".7"/></svg>
<svg style="left:42.5px;top:249.5px" width="24" height="24" viewBox="0 0 24 24"><ellipse cx="14" cy="20.5" rx="7" ry="1.5" fill="#000" opacity=".1"/><path d="M19.8 5.9L14.5 5L9.5 6.5Q5.5 8.3 4.6 10.8Q4.5 13 6.5 14.3L4.6 20.1L6.3 20.3L11 16.5L14.5 16.5Q17.5 15.5 18 12.5Z" fill="#f0c8ac" stroke="#b3641c" stroke-width="1" stroke-linejoin="round"/><path d="M14.5 5L19.8 5.9L18.8 10L13 8Z" fill="#faf0ea" stroke="#e8d8cc" stroke-width=".5"/><path d="M6.8 9.5Q8.5 11 8 13.3M9 8Q11 10 10.5 12.8M11.5 7.3Q13.5 9 13 12" fill="none" stroke="#b3641c" stroke-width=".8"/><path d="M10.5 13.5Q12.5 12.5 13.5 14.3L11 16.5Z" fill="#b3641c" opacity=".75"/></svg>
<svg style="left:74.5px;top:249.5px" width="24" height="24" viewBox="0 0 24 24"><ellipse cx="12" cy="20.3" rx="8" ry="1.5" fill="#000" opacity=".1"/><path d="M13.5 11.5L21.8 3.3" stroke="#2e3436" stroke-width="2" stroke-linecap="round"/><path d="M14.5 11.3L22.5 3.5" stroke="#888a85" stroke-width=".8" stroke-linecap="round" opacity=".5"/><circle cx="10.3" cy="14.2" r="5.7" fill="#3a3f41" stroke="#555753" stroke-width="1"/><path d="M6.5 12.5Q8 9.8 11 9.8" fill="none" stroke="#6a6f70" stroke-width=".9"/></svg>
<div style="left:76px;top:296px;width:38px;height:28px;background:#fff;border-right:1px solid #000;border-bottom:1px solid #000;border-top:1px solid #e0e0e0;"></div>
<div style="left:60px;top:282px;width:37px;height:27px;background:#f00;border-top:1px solid #000;border-left:1px solid #000;border-right:1px solid #eee;border-bottom:1px solid #eee;"></div>
<div style="left:64px;top:316px;width:8px;height:8px;background:#fff;border:1px solid #999;"></div><div style="left:60px;top:312px;width:8px;height:8px;background:#000;border:1px solid #fff;"></div>
<svg style="left:100px;top:281px" width="16" height="14" viewBox="0 0 16 14"><path d="M2.5 4.5l3-3v2h3q2 0 2 2v3h2l-3 3-3-3h2v-3h-3v2z" fill="#fff" stroke="#777" stroke-width=".8" stroke-linejoin="round"/></svg>
<div style="left:8px;top:329px;width:158px;height:2px;border-right:1px solid #a0a0a0;border-bottom:1px solid #a0a0a0;height:5px;top:327px;"></div>
<span style="left:9px;top:339.5px;font-size:9.8px;font-weight:bold;transform:scaleX(0.914);transform-origin:0 0;">Přesun</span>
<svg style="left:149px;top:338px" width="12" height="12" viewBox="0 0 12 12"><rect x=".5" y=".5" width="11" height="11" rx="1.5" fill="#f6f6f6" stroke="#6e6e6e"/><path d="M8.5 3v6l-5-3z" fill="#666"/></svg>
<span style="left:9px;top:361.5px;font-size:9.8px;transform:scaleX(0.976);transform-origin:0 0;">Přesun:</span>
<div style="left:43px;top:354px;width:24px;height:23px;border:1px solid #6e6e6e;border-radius:4px;background:linear-gradient(#d8d8d8,#e6e6e6);box-shadow:inset 0 1px 2px rgba(0,0,0,.15);"></div>
<svg style="left:45px;top:356px" width="20" height="19" viewBox="0 0 20 19"><path d="M4.5 9.5h13l-2 6.5h-13z" fill="#fff" stroke="#999" stroke-width=".8"/><path d="M5.5 6.5h12l-1.5 6h-12z" fill="#fff" stroke="#999" stroke-width=".8"/><rect x="3" y="2" width="9" height="7.5" fill="#e9b96e" stroke="#8f5902" stroke-width=".9"/><rect x="5" y="4.2" width="5" height="2.5" fill="#f57900"/></svg>
<svg style="left:70px;top:358px" width="14" height="14" viewBox="0 0 14 14"><rect x="1.5" y="1.5" width="11" height="11" fill="#ef5a5a" stroke="#cc2222" stroke-width="1" stroke-dasharray="1.5 1"/><rect x="2.5" y="2.5" width="9" height="4" fill="#f58a8a" opacity=".6"/></svg>
<svg style="left:90px;top:357px" width="20" height="20" viewBox="0 0 20 20"><path d="M5 16q2-9 7-9t5 4" fill="none" stroke="#3465a4" stroke-width="1"/><path d="M3 11l12-9" stroke="#000" stroke-width=".9"/><rect x="2" y="10" width="2.4" height="2.4" fill="#000"/><rect x="14" y="1" width="2.4" height="2.4" fill="#000"/><circle cx="9.5" cy="6.5" r="1.6" fill="#fff" stroke="#000" stroke-width=".8"/></svg>
<span style="left:9px;top:385.5px;font-size:9.8px;transform:scaleX(0.982);transform-origin:0 0;">Přepínač nástrojů&nbsp; (Shift)</span>
<svg style="left:22px;top:401px" width="13" height="13" viewBox="0 0 13 13"><defs><radialGradient id="rb401" cx=".4" cy=".35" r=".6"><stop offset="0" stop-color="#8fd6f5"/><stop offset=".5" stop-color="#1e7fc0"/><stop offset="1" stop-color="#0a3a66"/></radialGradient><linearGradient id="rg401" x1="0" y1="0" x2="1" y2="1"><stop offset="0" stop-color="#c8c8c8"/><stop offset="1" stop-color="#fdfdfd"/></linearGradient></defs><circle cx="6.5" cy="6.5" r="5.8" fill="url(#rg401)" stroke="#8a8a8a" stroke-width="1"/><circle cx="6.5" cy="6.5" r="3" fill="url(#rb401)"/></svg>
<span style="left:41px;top:402.5px;font-size:9.8px;transform:scaleX(1.021);transform-origin:0 0;">Vyberte vrstvu nebo vodítko</span>
<svg style="left:22px;top:422px" width="13" height="13" viewBox="0 0 13 13"><defs><radialGradient id="rb422" cx=".4" cy=".35" r=".6"><stop offset="0" stop-color="#8fd6f5"/><stop offset=".5" stop-color="#1e7fc0"/><stop offset="1" stop-color="#0a3a66"/></radialGradient><linearGradient id="rg422" x1="0" y1="0" x2="1" y2="1"><stop offset="0" stop-color="#c8c8c8"/><stop offset="1" stop-color="#fdfdfd"/></linearGradient></defs><circle cx="6.5" cy="6.5" r="5.8" fill="url(#rg422)" stroke="#8a8a8a" stroke-width="1"/></svg>
<span style="left:41px;top:423.5px;font-size:9.8px;transform:scaleX(1.021);transform-origin:0 0;">Přesunout aktivní vrstvu</span>
</div>
<div style="left:1028px;top:40px;width:6px;height:941px;background:linear-gradient(270deg,rgba(0,0,0,.2),rgba(0,0,0,.07) 40%,rgba(0,0,0,0));"></div>
<!-- ======= RIGHT DOCK ======= -->
<div id="dock" style="left:1034px;top:39px;width:226px;height:942px;">
<div style="left:0;top:0;width:226px;height:942px;border:1px solid #454545;border-bottom:none;background:linear-gradient(90deg,#cfcfcf 0,#b4b4b4 3px,#a4a4a4 6px,#a8a8a8 219px,#9a9a9a 220px,#c4c4c4 222px,#adadad 225px);"></div>
<div style="left:1px;top:1px;width:224px;height:23px;border-top:1px solid #e4e4e4;border-left:1px solid #e0e0e0;background:linear-gradient(#cdcdcd 0,#b6b6b6 5px,#a9a9a9 13px,#a6a6a6 19px,#b0b0b0 23px);"></div>
<div style="left:2px;top:4px;width:200px;height:19px;background:radial-gradient(ellipse 70px 9px at 70px 9px,rgba(200,200,200,.55),rgba(200,200,200,0)),radial-gradient(ellipse 50px 8px at 160px 10px,rgba(150,150,150,.5),rgba(150,150,150,0));"></div>
<div style="left:1px;top:24px;width:5px;height:918px;border-left:1px solid #dcdcdc;"></div>
<span style="left:8px;top:4.5px;font-size:13px;transform:scaleX(0.909);transform-origin:0 0;">Vrstvy, Kanály, Cesty, Zpět - Stopy,...</span>
<div style="left:203px;top:5px;width:17px;height:17px;border:1px solid #6a6a6a;border-radius:2px;background:linear-gradient(#bcbcbc,#a6a6a6);box-shadow:inset 0 0 0 1px rgba(255,255,255,.35);"></div>
<svg style="left:203px;top:5px" width="17" height="17" viewBox="0 0 17 17"><path d="M7 7.1l3 3M10 7.1l-3 3" stroke="#3b3b5a" stroke-width="3.3" stroke-linecap="square"/><path d="M7 7.1l3 3M10 7.1l-3 3" stroke="#fff" stroke-width="1.8" stroke-linecap="square"/></svg>
<div style="left:6px;top:24px;width:214px;height:918px;background:#f0f0f0;border:1px solid #3c3c3c;border-bottom:none;"></div>
<div style="left:8px;top:26px;width:144px;height:30px;background:#fff;border:1px solid #abadb3;border-top-color:#8e8f93;"></div>
<div style="left:9px;top:34px;width:23px;height:14px;background:#5bc9d2;border:1px solid #000;"></div>
<svg style="left:10px;top:35px" width="21" height="12" viewBox="0 0 21 12" shape-rendering="crispEdges"><rect width="21" height="12" fill="#5bc9d2"/><path d="M0 9l2-1h3l2 1 3-1h3l2 1 3-1h3v4h-21z" fill="#7fff00"/><circle cx="8.5" cy="4.3" r="2.8" fill="#f00" shape-rendering="auto"/><circle cx="15.3" cy="3" r="1.3" fill="#ff0" shape-rendering="auto"/><path d="M13 2.5l1 .3M17 1.5l.8-.8M17 4.5l1 .8M15.5 5v1M13.5 4.8l-.7.8" stroke="#e8f060" stroke-width=".7" shape-rendering="auto"/></svg>
<span style="left:33px;top:36.5px;font-size:9.8px;transform:scaleX(1.032);transform-origin:0 0;">Bez názvu-4</span>
<div style="left:132px;top:27px;width:19px;height:28px;border:1px solid #a5a5a5;background:linear-gradient(#f4f4f4,#e9e9e9 50%,#dcdcdc 50%,#d2d2d2);border-radius:1px;"></div>
<svg style="left:136px;top:38px" width="10" height="6" viewBox="0 0 10 6"><path d="M1 .5h8l-4 5z" fill="#000"/></svg>
<div style="left:154px;top:27px;width:63px;height:28px;border:1px solid #2c628b;border-radius:3px;background:linear-gradient(#e6f4fc 0,#c9e7f8 48%,#9bd2ef 50%,#6fb5dc 100%);box-shadow:inset 0 0 0 1px rgba(170,225,250,.8);"></div>
<span style="left:158px;top:36.5px;font-size:9.8px;transform:scaleX(1.027);transform-origin:0 0;">Automaticky</span>
<div style="left:9px;top:57px;width:209px;height:4px;border-right:1px solid #a0a0a0;border-bottom:1px solid #a0a0a0;"></div>
<div style="left:9px;top:61px;width:209px;height:1px;background:#fff;"></div>
<div style="left:8px;top:91px;width:208px;height:311px;background:#fff;border:1px solid #898c95;"></div>
<div style="left:42px;top:64px;width:28px;height:27px;background:linear-gradient(#f2f2f2,#ebebeb 50%,#dddddd 50%,#cfcfcf);border:1px solid #898c95;border-bottom:none;"></div>
<div style="left:70px;top:64px;width:28px;height:27px;background:linear-gradient(#f2f2f2,#ebebeb 50%,#dddddd 50%,#cfcfcf);border:1px solid #898c95;border-bottom:none;"></div>
<div style="left:98px;top:64px;width:30px;height:27px;background:linear-gradient(#f2f2f2,#ebebeb 50%,#dddddd 50%,#cfcfcf);border:1px solid #898c95;border-bottom:none;"></div>
<div style="left:8px;top:62px;width:34px;height:30px;background:#fff;border:1px solid #898c95;border-bottom:none;border-radius:1px 1px 0 0;"></div>
<svg style="left:13px;top:66px" width="24" height="24" viewBox="0 0 24 24"><defs><linearGradient id="glay" x1="0" y1="0" x2="1" y2="1"><stop offset="0" stop-color="#dcdcdc"/><stop offset="1" stop-color="#fafafa"/></linearGradient></defs><g fill="#fff" stroke="#a2a2a2" stroke-width="1.1" stroke-linejoin="round"><path d="M4.2 12.9H22L18.4 21.5H.3Z"/><path d="M4.2 8.3H22L18.4 16.9H.3Z"/><path d="M4.2 3.2H22L18.4 11.8H.3Z" fill="url(#glay)"/></g></svg>
<svg style="left:42.5px;top:66px" width="24" height="24" viewBox="0 0 24 24"><g stroke-linejoin="round" stroke-width=".9"><path d="M.5 22.3H18.3L22.3 12.3H4.7Z" fill="#3465a4" stroke="#204a87"/><path d="M.5 18.2H18.3L22.3 8.2H4.7Z" fill="#4e9a06" stroke="#3a7304"/><path d="M.5 13.3H18.3L22.3 2.3H4.7Z" fill="#ef2929" stroke="#a40000"/><path d="M2 12.3L5.5 3.3H21" fill="none" stroke="#f77"/><path d="M1.5 12.3H18" stroke="#fbb" stroke-width=".7"/></g></svg>
<svg style="left:72px;top:66px" width="24" height="25" viewBox="0 0 24 25"><path d="M3.1 19.5Q4 10 6.4 7.2Q9 6 11.5 9.5T17.3 12.3Q20.5 9 20.9 2.5M5 23.5Q8 18.5 12.5 19.6Q14.5 20.5 15.8 23" fill="none" stroke="#3465a4" stroke-width="1"/><path d="M.6 11.8L11.7 2.9M20.9 9.8L13.8 16.2M8 14.8L15.8 22.2" stroke="#000" stroke-width=".9"/><g fill="#fff" stroke="#000" stroke-width=".9"><rect x="5" y="5.8" width="2.8" height="2.8"/><rect x="15.9" y="10.9" width="2.8" height="2.8"/><rect x="11.1" y="18.2" width="2.8" height="2.8"/></g><g fill="#000"><rect x="-.2" y="10.8" width="2" height="2"/><rect x="10.7" y="1.9" width="2" height="2"/><rect x="19.9" y="8.8" width="2" height="2"/><rect x="12.8" y="15.2" width="2" height="2"/><rect x="7" y="13.8" width="2" height="2"/><rect x="14.8" y="21.2" width="2" height="2"/></g></svg>
<svg style="left:101px;top:66px" width="26" height="24" viewBox="0 0 26 24"><ellipse cx="12" cy="21.5" rx="9" ry="1.5" fill="#000" opacity=".1"/><path d="M.6 8.7L7.6 2V5.5Q15.5 5 15.5 12Q15.5 18 10 20.5Q12.5 16 11 13.5Q10 11.6 7.6 11.8V15.3Z" transform="translate(6.5 0)" fill="#f3e9b0" stroke="#dccb78" stroke-width=".9" stroke-linejoin="round"/><path d="M.6 8.7L7.6 2V5.5Q15.5 5 15.5 12Q15.5 18 10 20.5Q12.5 16 11 13.5Q10 11.6 7.6 11.8V15.3Z" fill="#f5d60a" stroke="#c4a000" stroke-width="1" stroke-linejoin="round"/><path d="M2.3 8.7L6.6 4.5V6.5Q14.3 6 14.4 12" fill="none" stroke="#fdf3a6" stroke-width="1"/></svg>
<span style="left:12.5px;top:101.5px;font-size:9.8px;transform:scaleX(0.971);transform-origin:0 0;font-weight:bold;">Vrstvy</span>
<svg style="left:198px;top:100px" width="12" height="11" viewBox="0 0 12 11"><rect x=".5" y=".5" width="11" height="10" rx="1.5" fill="#fafafa" stroke="#5e5e5e"/><path d="M8.5 2.5v6l-5-3z" fill="#707070"/></svg>
<span style="left:12.5px;top:120.5px;font-size:9.8px;transform:scaleX(0.948);transform-origin:0 0;">Režim:</span>
<span style="left:64px;top:120.5px;font-size:9.8px;transform:scaleX(1.01);transform-origin:0 0;">Normální</span>
<div style="left:195px;top:116px;width:19px;height:19px;border:1px solid #707070;background:linear-gradient(#f2f2f2,#ebebeb 50%,#dddddd 50%,#cfcfcf);box-shadow:inset 0 0 0 1px #fcfcfc;"></div>
<svg style="left:200px;top:123px" width="9" height="5" viewBox="0 0 9 5"><path d="M.5 0h8l-4 5z" fill="#000"/></svg>
<span style="left:12.5px;top:142.5px;font-size:9.8px;transform:scaleX(0.909);transform-origin:0 0;">Krytí:</span>
<div style="left:64px;top:147px;width:98px;height:1px;background:#a8a8a8;"></div>
<div style="left:64px;top:148px;width:98px;height:1px;background:#e4e4e4;"></div>
<div style="left:159px;top:139px;width:10px;height:16px;border:1px solid #8a8a8a;border-radius:2px;background:linear-gradient(90deg,#f4f4f4,#e2e2e2 50%,#d0d0d0);box-shadow:0 1px 1px rgba(0,0,0,.2);"></div>
<span style="left:176px;top:142.5px;font-size:9.8px;transform:scaleX(0.92);transform-origin:0 0;">100,0</span>
<svg style="left:208px;top:141px" width="7" height="14" viewBox="0 0 7 14"><rect x=".5" y=".5" width="6" height="13" fill="#eee" stroke="#ccc" stroke-width=".6"/><path d="M1 5.5l2.5-3.5 2.5 3.5z" fill="#aaa"/><path d="M1 8.5l2.5 3.5 2.5-3.5z" fill="#3355cc"/></svg>
<span style="left:12.5px;top:164.5px;font-size:9.8px;transform:scaleX(1.021);transform-origin:0 0;">Zamknout:</span>
<div style="left:64px;top:163px;width:13px;height:13px;border:1px solid #8e8f8f;background:linear-gradient(135deg,#d8dce2,#fbfbfb);box-shadow:inset 0 0 0 1px #f4f4f4;"></div>
<div style="left:82px;top:161px;width:16px;height:16px;background-color:#999;background-image:linear-gradient(45deg,#666 25%,transparent 25%,transparent 75%,#666 75%),linear-gradient(45deg,#666 25%,transparent 25%,transparent 75%,#666 75%);background-size:8px 8px;background-position:0 0,4px 4px;"></div>
<div style="left:12px;top:181px;width:202px;height:199px;background:#fff;border:1px solid #8a8d96;"></div>
<div style="left:13px;top:182px;width:200px;height:33px;background:#efefef;"></div>
<svg style="left:21px;top:193px" width="18" height="12" viewBox="0 0 18 12"><path d="M.8 6.2q3.5-4.7 8.2-4.7t8.2 4.7q-3.5 4.3-8.2 4.3t-8.2-4.3z" fill="#fff" stroke="#9a9a9a" stroke-width=".9"/><path d="M1 5.8q3.5-4.3 8-4.3t8 4.3" fill="none" stroke="#555" stroke-width="1"/><circle cx="8.8" cy="5.8" r="3.3" fill="#2a4d9a"/><circle cx="8.8" cy="5.8" r="1.5" fill="#0c1a3a"/><circle cx="9.8" cy="4.5" r="1.1" fill="#fff"/></svg>
<svg style="left:21px;top:257px" width="18" height="12" viewBox="0 0 18 12"><path d="M.8 6.2q3.5-4.7 8.2-4.7t8.2 4.7q-3.5 4.3-8.2 4.3t-8.2-4.3z" fill="#fff" stroke="#9a9a9a" stroke-width=".9"/><path d="M1 5.8q3.5-4.3 8-4.3t8 4.3" fill="none" stroke="#555" stroke-width="1"/><circle cx="8.8" cy="5.8" r="3.3" fill="#2a4d9a"/><circle cx="8.8" cy="5.8" r="1.5" fill="#0c1a3a"/><circle cx="9.8" cy="4.5" r="1.1" fill="#fff"/></svg>
<div style="left:80px;top:187px;width:36px;height:24px;background:#fff;"></div>
<div style="left:82px;top:189px;width:32px;height:20px;background-color:#999;background-image:linear-gradient(45deg,#666 25%,transparent 25%,transparent 75%,#666 75%),linear-gradient(45deg,#666 25%,transparent 25%,transparent 75%,#666 75%);background-size:8px 8px;background-position:0 0,4px 4px;"></div>
<svg style="left:91px;top:191px" width="10" height="10" viewBox="0 0 10 10"><circle cx="5" cy="5" r="4.4" fill="#f00"/></svg>
<div style="left:80px;top:219px;width:36px;height:24px;background:#000;"></div><svg style="left:82px;top:221px" width="32" height="20" viewBox="0 0 32 20" shape-rendering="crispEdges"><rect width="32" height="20" fill="#5bc9d2"/><path d="M0 15l2-1h3l2 1h2l2-1.5h3l2 1h3l3-1h3l2-.5H32V21H0z" fill="#7fff00"/><circle cx="13.5" cy="6.5" r="4.6" fill="#f00" shape-rendering="auto"/><circle cx="24.5" cy="4" r="2.2" fill="#ff0" shape-rendering="auto"/><path d="M19 2h2M27.5 2l1.5-1M28 5l1.5 1M25 7v1.5M21.5 6l-1 1.5M22 .5l1 .5M26 0v1" stroke="#ff0" stroke-width="1.1" shape-rendering="auto"/></svg>
<div style="left:80px;top:251px;width:36px;height:24px;background:#000;"></div><svg style="left:82px;top:253px" width="32" height="20" viewBox="0 0 32 20" shape-rendering="crispEdges"><rect width="32" height="20" fill="#5bc9d2"/><path d="M0 15l2-1h3l2 1h2l2-1.5h3l2 1h3l3-1h3l2-.5H32V21H0z" fill="#7fff00"/><circle cx="24.5" cy="4" r="2.2" fill="#ff0" shape-rendering="auto"/><path d="M19 2h2M27.5 2l1.5-1M28 5l1.5 1M25 7v1.5M21.5 6l-1 1.5M22 .5l1 .5M26 0v1" stroke="#ff0" stroke-width="1.1" shape-rendering="auto"/></svg>
<span style="left:120px;top:194.5px;font-size:9.8px;transform:scaleX(0.926);transform-origin:0 0;">vrstva_c2</span>
<span style="left:120px;top:226.5px;font-size:9.8px;transform:scaleX(1.01);transform-origin:0 0;">Viditelné</span>
<span style="left:120px;top:258.5px;font-size:9.8px;transform:scaleX(0.999);transform-origin:0 0;font-weight:bold;">Pozadí</span>
<svg style="left:18px;top:381.5px" width="18" height="18" viewBox="0 0 18 18"><path d="M4.5 2.5h6l3 3v10h-9z" fill="#fff" stroke="#b8b8b8" stroke-width=".9" stroke-linejoin="round"/><path d="M10.5 2.5v3h3" fill="#eee" stroke="#b8b8b8" stroke-width=".8"/></svg>
<svg style="left:52px;top:381.5px" width="18" height="18" viewBox="0 0 18 18"><path d="M9 2.5l6 6.5h-3v5.5h-6v-5.5h-3z" fill="#9abf8a" stroke="#7da26e" stroke-width=".9" stroke-linejoin="round" stroke-dasharray="1 .6"/></svg>
<svg style="left:86px;top:381.5px" width="18" height="18" viewBox="0 0 18 18"><path d="M9 15.5l6-6.5h-3v-5.5h-6v5.5h-3z" fill="#73d216" stroke="#4e9a06" stroke-width=".9" stroke-linejoin="round"/><path d="M7 4.5h4v5.5" fill="none" stroke="#b7f26c" stroke-width=".8"/></svg>
<svg style="left:120px;top:381.5px" width="18" height="18" viewBox="0 0 18 18"><rect x="5.5" y="6.5" width="10" height="9" fill="#d8dde6" stroke="#7c8fae" stroke-width=".9"/><rect x="2.5" y="2.5" width="10" height="9" fill="#eef1f6" stroke="#56719c" stroke-width=".9"/><rect x="4" y="4" width="7" height="6" fill="#3e5f93"/><path d="M4 9l2-2.5 2 1.5 1.5-1 1.5 2z" fill="#9fb4d4"/></svg>
<svg style="left:154px;top:381.5px" width="18" height="18" viewBox="0 0 18 18"><g fill="none" stroke="#6a6a6a" stroke-width="2.3" stroke-dasharray="1 .45"><path d="M9 5v10M5.5 7.5h7M3 11q1 4.5 6 4.5t6-4.5"/><circle cx="9" cy="3.5" r="1.3"/></g><path d="M1.5 9.5l1 4 2.5-2.5zM16.5 9.5l-1 4-2.5-2.5z" fill="#6a6a6a"/></svg>
<svg style="left:188px;top:381.5px" width="18" height="18" viewBox="0 0 18 18"><path d="M4 4.5h10l-1 10.5q-4 1.5-8 0z" fill="#6c6c6c" stroke="#444" stroke-width=".9"/><ellipse cx="9" cy="4.5" rx="5.3" ry="2" fill="#8a8a8a" stroke="#444" stroke-width=".9"/><path d="M6 7.5l.5 7M9 8v7M12 7.5l-.5 7" stroke="#9a9a9a" stroke-width=".7"/></svg>
<div style="left:8px;top:437px;width:208px;height:505px;background:#fff;border:1px solid #898c95;border-bottom:none;"></div>
<div style="left:10px;top:412px;width:28px;height:26px;background:linear-gradient(#f2f2f2,#ebebeb 50%,#dddddd 50%,#cfcfcf);border:1px solid #898c95;border-bottom:none;border-radius:2px 2px 0 0;"></div>
<div style="left:38px;top:412px;width:28px;height:26px;background:linear-gradient(#f2f2f2,#ebebeb 50%,#dddddd 50%,#cfcfcf);border:1px solid #898c95;border-bottom:none;border-radius:2px 2px 0 0;"></div>
<div style="left:64px;top:409px;width:32px;height:30px;background:#fff;border:1px solid #898c95;border-bottom:none;border-radius:2px 2px 0 0;"></div>
<div style="left:12px;top:414px;width:22px;height:23px;background:#fff;border:1px solid #000;border-bottom:none;"></div>
<svg style="left:13px;top:415px" width="20" height="22" viewBox="-1 0 20 22"><circle cx="8.5" cy="9.5" r="5.5" fill="#000"/><path d="M19 17v5h-5z" fill="#7b8fe8"/></svg>
<div style="left:40px;top:414px;width:22px;height:23px;border:1px solid #000;border-bottom:none;background:repeating-linear-gradient(90deg,#ffc14d 0,#ffd27a 2px,#f5a623 3px,#ffb84d 5px);"></div>
<div style="left:68px;top:413px;width:22px;height:22px;border:1px solid #000;background:linear-gradient(90deg,#f00,#fff);"></div>
<span style="left:12.5px;top:446.5px;font-size:9.8px;transform:scaleX(0.942);transform-origin:0 0;font-weight:bold;">Přechody</span>
<svg style="left:198px;top:445px" width="12" height="11" viewBox="0 0 12 11"><rect x=".5" y=".5" width="11" height="10" rx="1.5" fill="#fafafa" stroke="#5e5e5e"/><path d="M8.5 2.5v6l-5-3z" fill="#707070"/></svg>
<div style="left:12px;top:461px;width:202px;height:467px;background:#fff;border:1px solid #8a8d96;"></div>
<div style="left:15px;top:509px;width:180px;height:23px;background:#efefef;"></div>
<div style="left:13px;top:462px;width:182px;height:447px;overflow:hidden;">
<div style="left:3px;top:3px;width:34px;height:19px;border:1px solid #000;background:linear-gradient(90deg,#f00,#ff00c8 14%,#8a3cff 28%,#4d78ff 38%,#5fd8ff 50%,#9dffd0 62%,#d8ffc8 75%,#fdffe8 88%,#fff);"></div>
<span style="left:41px;top:7.5px;font-size:9.8px;word-spacing:.6px;transform:scaleX(.995);transform-origin:0 0;">Popředí do pozadí (HSV odstín p</span>
<div style="left:3px;top:26px;width:34px;height:19px;border:1px solid #000;background:linear-gradient(90deg,#f00,#ff9a00 8%,#e4ff1a 18%,#5dff3a 30%,#66ffb0 43%,#8fd8ff 56%,#c0b8ff 68%,#f4d0ff 84%,#fff);"></div>
<span style="left:41px;top:30.5px;font-size:9.8px;word-spacing:.6px;transform:scaleX(.995);transform-origin:0 0;">Popředí do pozadí (HSV proti sm</span>
<div style="left:3px;top:49px;width:34px;height:19px;border:1px solid #000;background:linear-gradient(90deg,#f00,#fff);"></div>
<span style="left:41px;top:53.5px;font-size:9.8px;word-spacing:.6px;transform:scaleX(.995);transform-origin:0 0;">Popředí do pozadí (RGB)</span>
<div style="left:3px;top:72px;width:34px;height:19px;border:1px solid #000;background-color:#999;background-image:linear-gradient(90deg,#f00,rgba(255,0,0,.6) 50%,rgba(255,0,0,0)),linear-gradient(45deg,#666 25%,transparent 25%,transparent 75%,#666 75%),linear-gradient(45deg,#666 25%,transparent 25%,transparent 75%,#666 75%);background-size:100% 100%,8px 8px,8px 8px;background-position:0 0,0 0,4px 4px;"></div>
<span style="left:41px;top:76.5px;font-size:9.8px;word-spacing:.6px;transform:scaleX(.995);transform-origin:0 0;">Popředí do průhlednosti</span>
<div style="left:3px;top:95px;width:34px;height:19px;border:1px solid #000;background:linear-gradient(90deg,#4a4af8,#4058f0 45%,#2a9ad0 62%,#3ac8a0 70%,#b040e8 78%,#ff30e0 86%,#ffa0a0 92%,#fff020 100%);"></div>
<span style="left:41px;top:99.5px;font-size:9.8px;word-spacing:.6px;transform:scaleX(.995);transform-origin:0 0;">Abstract 1</span>
<div style="left:3px;top:118px;width:34px;height:19px;border:1px solid #000;background:linear-gradient(90deg,#ff0028,#f8306a 25%,#f070d0 52%,#8a60d8 62%,#40c8a0 70%,#e8f060 80%,#f0a0d0 90%,#3040e0 100%);"></div>
<span style="left:41px;top:122.5px;font-size:9.8px;word-spacing:.6px;transform:scaleX(.995);transform-origin:0 0;">Abstract 2</span>
<div style="left:3px;top:141px;width:34px;height:19px;border:1px solid #000;background:linear-gradient(90deg,#208a10,#a0a040 10%,#e0b060 30%,#f8b068 42%,#3050b0 56%,#8090a8 72%,#b0b890 82%,#d8e060 92%,#10c020 100%);"></div>
<span style="left:41px;top:145.5px;font-size:9.8px;word-spacing:.6px;transform:scaleX(.995);transform-origin:0 0;">Abstract 3</span>
<div style="left:3px;top:164px;width:34px;height:19px;border:1px solid #000;background-color:#999;background-image:linear-gradient(90deg,rgba(40,10,60,.3),#2a0850 24%,#48106a 40%,#c00020 50%,#48106a 60%,#2a0850 76%,rgba(40,10,60,.3)),linear-gradient(45deg,#666 25%,transparent 25%,transparent 75%,#666 75%),linear-gradient(45deg,#666 25%,transparent 25%,transparent 75%,#666 75%);background-size:100% 100%,8px 8px,8px 8px;background-position:0 0,0 0,4px 4px;"></div>
<span style="left:41px;top:168.5px;font-size:9.8px;word-spacing:.6px;transform:scaleX(.995);transform-origin:0 0;">Aneurism</span>
<div style="left:3px;top:187px;width:34px;height:19px;border:1px solid #000;background:linear-gradient(90deg,#000,#fff 20%,#050505 34%,#fff 50%,#050505 66%,#fff 81%,#000);"></div>
<span style="left:41px;top:191.5px;font-size:9.8px;word-spacing:.6px;transform:scaleX(.995);transform-origin:0 0;">Blinds</span>
<div style="left:3px;top:210px;width:34px;height:19px;border:1px solid #000;background:linear-gradient(90deg,#1a80ff,#30b0ff 30%,#40e0f8 55%,#20e8c0 100%);"></div>
<span style="left:41px;top:214.5px;font-size:9.8px;word-spacing:.6px;transform:scaleX(.995);transform-origin:0 0;">Blue Green</span>
<div style="left:3px;top:233px;width:34px;height:19px;border:1px solid #000;background:linear-gradient(90deg,#a87848,#c87810 22%,#b86818 35%,#c08868 55%,#a07868 72%,#b88858 85%,#c89048);"></div>
<span style="left:41px;top:237.5px;font-size:9.8px;word-spacing:.6px;transform:scaleX(.995);transform-origin:0 0;">Browns</span>
<div style="left:3px;top:256px;width:34px;height:19px;border:1px solid #000;background:linear-gradient(90deg,#80807c,#c8c8c4 25%,#f0f0ec 42%,#fff 50%,#b0b0b0 70%,#707070 100%);"></div>
<span style="left:41px;top:260.5px;font-size:9.8px;word-spacing:.6px;transform:scaleX(.995);transform-origin:0 0;">Brushed Aluminium</span>
<div style="left:3px;top:279px;width:34px;height:19px;border:1px solid #000;background:linear-gradient(90deg,#fff 0,#fff 55%,#888 60%,#200800 64%,#c82000 71%,#ff9000 79%,#ffe000 87%,#ffb000 95%,#e86000 100%);"></div>
<span style="left:41px;top:283.5px;font-size:9.8px;word-spacing:.6px;transform:scaleX(.995);transform-origin:0 0;">Burning Paper</span>
<div style="left:3px;top:302px;width:34px;height:19px;border:1px solid #000;background-color:#999;background-image:linear-gradient(90deg,rgba(0,0,0,0) 0,rgba(0,0,0,0) 54%,rgba(60,30,20,.6) 60%,#200800 64%,#c82000 71%,#ff9000 79%,#ffe000 87%,#ffb000 95%,#e86000 100%),linear-gradient(45deg,#666 25%,transparent 25%,transparent 75%,#666 75%),linear-gradient(45deg,#666 25%,transparent 25%,transparent 75%,#666 75%);background-size:100% 100%,8px 8px,8px 8px;background-position:0 0,0 0,4px 4px;"></div>
<span style="left:41px;top:306.5px;font-size:9.8px;word-spacing:.6px;transform:scaleX(.995);transform-origin:0 0;">Burning Transparency</span>
<div style="left:3px;top:325px;width:34px;height:19px;border:1px solid #000;background:linear-gradient(90deg,#002a90,#0850a8 30%,#1890b8 48%,#60d0c0 58%,#f0ffd8 64%,#308a40 76%,#0a6a10 100%);"></div>
<span style="left:41px;top:329.5px;font-size:9.8px;word-spacing:.6px;transform:scaleX(.995);transform-origin:0 0;">Caribbean Blues</span>
<div style="left:3px;top:348px;width:34px;height:19px;border:1px solid #000;background:linear-gradient(90deg,#fff,#e4e4e4 22%,#e8e800 27%,#00e8e8 31%,#e0e0e0 37%,#f4f4f4 52%,#dcdcdc 69%,#00e8e8 74%,#e8e800 79%,#e8e8e8 84%,#fff);"></div>
<span style="left:41px;top:352.5px;font-size:9.8px;word-spacing:.6px;transform:scaleX(.995);transform-origin:0 0;">CD</span>
<div style="left:3px;top:371px;width:34px;height:19px;border:1px solid #000;background:linear-gradient(90deg,#fff,#e8e8e8 30%,#dcdcdc 48%,#e8e800 54%,#00e8e8 60%,#d8d8d8 68%,#ececec 85%,#d4d4d4);"></div>
<span style="left:41px;top:375.5px;font-size:9.8px;word-spacing:.6px;transform:scaleX(.995);transform-origin:0 0;">CD Half</span>
<div style="left:3px;top:394px;width:34px;height:19px;border:1px solid #000;background-color:#999;background-image:linear-gradient(90deg,rgba(80,40,20,0),rgba(80,40,20,.05) 70%,rgba(120,70,50,.45) 100%),linear-gradient(45deg,#666 25%,transparent 25%,transparent 75%,#666 75%),linear-gradient(45deg,#666 25%,transparent 25%,transparent 75%,#666 75%);background-size:100% 100%,8px 8px,8px 8px;background-position:0 0,0 0,4px 4px;"></div>
<span style="left:41px;top:398.5px;font-size:9.8px;word-spacing:.6px;transform:scaleX(.995);transform-origin:0 0;">Coffee</span>
<div style="left:3px;top:417px;width:34px;height:19px;border:1px solid #000;background:linear-gradient(90deg,#fff,#9090a8 25%,#38385a 48%,#202040 60%,#3a8a9a 63%,#68c0c8 100%);"></div>
<span style="left:41px;top:421.5px;font-size:9.8px;word-spacing:.6px;transform:scaleX(.995);transform-origin:0 0;">Cold Steel</span>
<div style="left:3px;top:440px;width:34px;height:19px;border:1px solid #000;background:linear-gradient(90deg,#180820,#f0f0f4 12%,#d0d0dc 30%,#8080a0 55%,#302858 80%,#181040 92%,#100828);"></div>
<span style="left:41px;top:444.5px;font-size:9.8px;word-spacing:.6px;transform:scaleX(.995);transform-origin:0 0;">Cold Steel 2</span>
</div>
<div style="left:196px;top:463px;width:16px;height:446px;background:#f0f0f0;border-left:1px solid #e6e6e6;"></div>
<svg style="left:200px;top:470px" width="9" height="5" viewBox="0 0 9 5"><path d="M.5 5l4-4.5 4 4.5z" fill="#a2a2a2"/></svg>
<div style="left:197px;top:481px;width:14px;height:95px;border:1px solid #979797;border-radius:2px;background:linear-gradient(90deg,#f4f4f4,#e4e4e4 45%,#d0d0d0 50%,#c8c8c8);"></div>
<svg style="left:200px;top:523px" width="9" height="9" viewBox="0 0 9 9" shape-rendering="crispEdges"><path d="M0 1h8M0 4h8M0 7h8" stroke="#5a5a5a" stroke-width="1"/><path d="M0 2h8M0 5h8M0 8h8" stroke="#fff" stroke-width="1"/></svg>
<svg style="left:200px;top:898px" width="9" height="5" viewBox="0 0 9 5"><path d="M.5 0h8l-4 4.5z" fill="#3c3c3c"/></svg>
<div style="left:13px;top:910px;width:182px;height:17px;background:#f0f0f0;"></div>
<svg style="left:19px;top:914px" width="5" height="9" viewBox="0 0 5 9"><path d="M5 .5l-4.5 4 4.5 4z" fill="#8c8c8c"/></svg>
<div style="left:32px;top:911px;width:80px;height:15px;border:1px solid #979797;border-radius:2px;background:linear-gradient(#f4f4f4,#e4e4e4 45%,#d0d0d0 50%,#c8c8c8);"></div>
<svg style="left:67px;top:914px" width="9" height="9" viewBox="0 0 9 9" shape-rendering="crispEdges"><path d="M1 0v8M4 0v8M7 0v8" stroke="#5a5a5a" stroke-width="1"/><path d="M2 0v8M5 0v8M8 0v8" stroke="#fff" stroke-width="1"/></svg>
<svg style="left:183px;top:914px" width="5" height="9" viewBox="0 0 5 9"><path d="M0 .5l4.5 4-4.5 4z" fill="#2c2c2c"/></svg>
<svg style="left:21px;top:930px" width="18" height="18" viewBox="0 0 18 18"><path d="M4.5 2.5h6l3 3v10h-9z" fill="#fff" stroke="#b8b8b8" stroke-width=".9"/><path d="M6 13l6.5-7.5 1.5 1.5-6.5 7.5-2 .5z" fill="#e9a13b" stroke="#8f5902" stroke-width=".7"/><path d="M12.5 5.5l1-1 1.5 1.5-1 1z" fill="#ef5d6b"/></svg>
<svg style="left:61px;top:930px" width="18" height="18" viewBox="0 0 18 18"><path d="M4.5 2.5h6l3 3v10h-9z" fill="#fff" stroke="#b8b8b8" stroke-width=".9" stroke-linejoin="round"/><path d="M10.5 2.5v3h3" fill="#eee" stroke="#b8b8b8" stroke-width=".8"/></svg>
<svg style="left:101px;top:930px" width="18" height="18" viewBox="0 0 18 18"><rect x="5.5" y="6.5" width="10" height="9" fill="#d8dde6" stroke="#7c8fae" stroke-width=".9"/><rect x="2.5" y="2.5" width="10" height="9" fill="#eef1f6" stroke="#56719c" stroke-width=".9"/><rect x="4" y="4" width="7" height="6" fill="#3e5f93"/><path d="M4 9l2-2.5 2 1.5 1.5-1 1.5 2z" fill="#9fb4d4"/></svg>
<svg style="left:141px;top:930px" width="18" height="18" viewBox="0 0 18 18"><path d="M4 4.5h10l-1 10.5q-4 1.5-8 0z" fill="#8c8c8c" stroke="#555" stroke-width="1" stroke-dasharray="1 .7"/><ellipse cx="9" cy="4.5" rx="5.3" ry="2" fill="#9a9a9a" stroke="#555" stroke-width="1" stroke-dasharray="1 .7"/></svg>
<svg style="left:183px;top:930px" width="18" height="18" viewBox="0 0 18 18"><path d="M3 9q0-5.5 6-5.5 3 0 4.5 2l1.5-2v5.5h-5.5l2-2q-1-1.2-2.5-1.2-3.5 0-3.5 3.2z" fill="#729fcf" stroke="#3465a4" stroke-width=".9" stroke-linejoin="round"/><path d="M15 9q0 5.5-6 5.5" fill="none" stroke="#3465a4" stroke-width="2"/></svg>
</div>
<svg style="left:1025px;top:245px" width="70" height="55" viewBox="0 0 70 55"><path d="M25 9.8C28.1 9.5 30.8 10.2 33.8 11.2C36.7 12.3 39.8 14.8 42.5 16.2C45.2 17.7 47.7 18.8 50 20C52.3 21.2 54.8 22.4 56.2 23.8C57.7 25.1 59 26.9 58.8 28.1C58.5 29.4 56.5 30.1 55 31.2C53.5 32.4 51.5 33.5 50 35C48.5 36.5 47.5 38.5 46.2 40C45 41.5 44.4 42.8 42.5 43.8C40.6 44.7 37.5 45.6 35 45.6C32.5 45.6 30 44.8 27.5 43.8C25 42.7 22.5 41.1 20 39.4C17.5 37.7 14.4 35.9 12.5 33.8C10.6 31.6 9.2 28.8 8.8 26.2C8.3 23.8 9 21 10 18.8C11 16.5 12.5 14 15 12.5C17.5 11 21.9 10 25 9.8z" fill="none" stroke="#000" stroke-width="8.3" stroke-linejoin="round"/></svg>
</body>
</html>
